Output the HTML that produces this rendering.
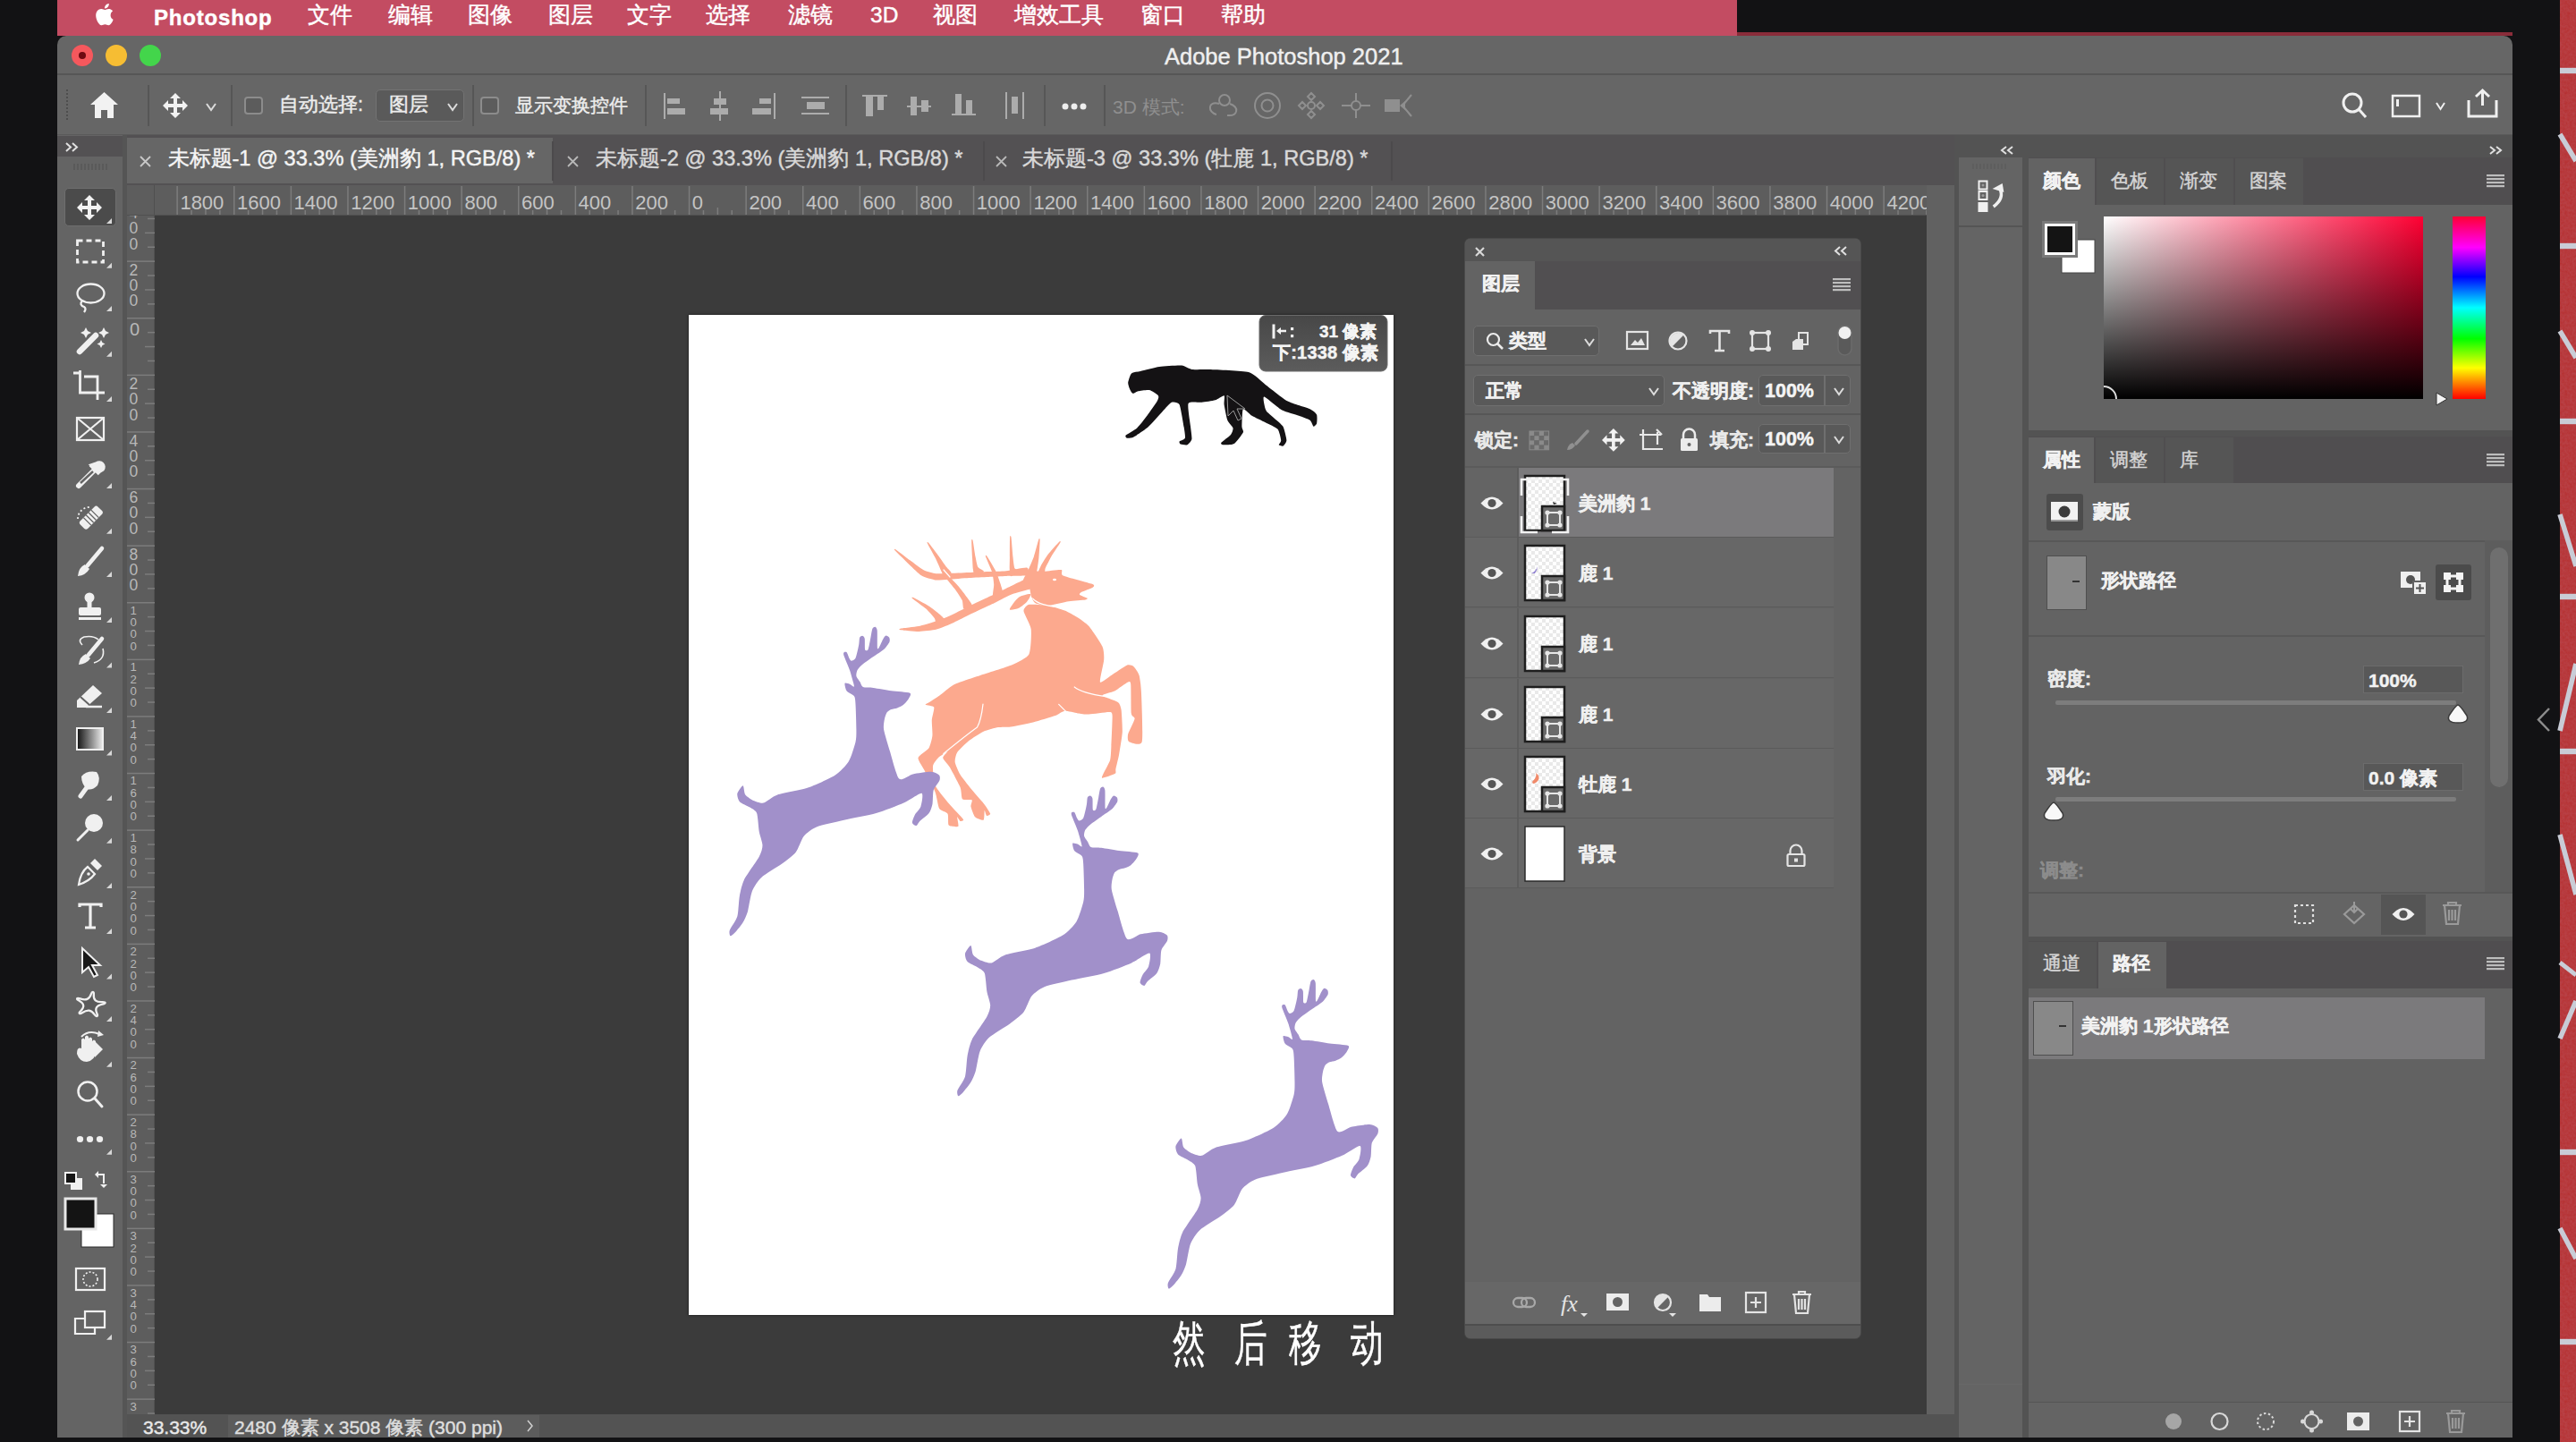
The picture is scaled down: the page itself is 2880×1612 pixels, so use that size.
<!DOCTYPE html><html><head><meta charset="utf-8"><style>
*{margin:0;padding:0;box-sizing:border-box}
html,body{width:2880px;height:1612px;overflow:hidden;background:#121214;font-family:"Liberation Sans",sans-serif;color:#e8e8e8}
.a{position:absolute}
.t{position:absolute;white-space:pre;line-height:1;-webkit-text-stroke:0.45px currentColor}
svg{position:absolute;overflow:visible}
</style></head><body><div class="a" style="left:0px;top:0px;width:2880px;height:1612px;background:#121214;"></div>
<svg style="left:2862px;top:0" width="18" height="1612"><defs><filter id="rt"><feTurbulence type="fractalNoise" baseFrequency="0.35" numOctaves="2" seed="3"/><feColorMatrix values="0 0 0 0 0.5  0 0 0 0 0.08  0 0 0 0 0.1  0 0 0 0.7 0"/><feComposite in2="SourceGraphic" operator="in"/></filter></defs><rect width="18" height="1612" fill="#b52f2f"/><rect width="18" height="1612" fill="#b52f2f" filter="url(#rt)"/><path d="M0 79 L18 79" stroke="#c9ccd6" stroke-width="6.4"/><path d="M0 150 L18 180" stroke="#c9ccd6" stroke-width="5.6000000000000005"/><path d="M0 275 L18 275" stroke="#c9ccd6" stroke-width="6.4"/><path d="M0 370 L18 400" stroke="#c9ccd6" stroke-width="5.6000000000000005"/><path d="M0 471 L18 471" stroke="#c9ccd6" stroke-width="6.4"/><path d="M0 575 L18 633" stroke="#c9ccd6" stroke-width="5.6000000000000005"/><path d="M0 667 L18 667" stroke="#c9ccd6" stroke-width="6.4"/><path d="M0 817 L18 742" stroke="#c9ccd6" stroke-width="5.6000000000000005"/><path d="M0 840 L18 840" stroke="#c9ccd6" stroke-width="6.4"/><path d="M0 933 L18 1000" stroke="#c9ccd6" stroke-width="5.6000000000000005"/><path d="M0 1076 L18 1090" stroke="#c9ccd6" stroke-width="4.800000000000001"/><path d="M0 1161 L18 1119" stroke="#c9ccd6" stroke-width="5.6000000000000005"/><path d="M0 1288 L18 1288" stroke="#c9ccd6" stroke-width="6.4"/><path d="M0 1373 L18 1407" stroke="#c9ccd6" stroke-width="5.6000000000000005"/><path d="M0 1500 L18 1500" stroke="#c9ccd6" stroke-width="6.4"/></svg>
<div class="a" style="left:64px;top:0px;width:1878px;height:40px;background:#c34c62;"></div>
<div class="a" style="left:1942px;top:36px;width:867px;height:4px;background:#8a2c3a;"></div>
<svg style="left:104px;top:2px" width="28" height="28" viewBox="0 0 28 28"><path fill="#fff" d="M19.6 14.9c0-3.1 2.5-4.5 2.6-4.6-1.4-2.1-3.6-2.4-4.4-2.4-1.9-.2-3.6 1.1-4.6 1.1-.9 0-2.4-1.1-4-1-2 0-3.9 1.200-5 3-2.1 3.700-.5 9.200 1.500 12.200 1 1.500 2.200 3.100 3.800 3 1.500-.1 2.100-1 3.900-1s2.300 1 3.900 1c1.600 0 2.700-1.500 3.700-3 1.200-1.700 1.600-3.300 1.700-3.400-.1 0-3.100-1.200-3.100-4.900zM16.600 5.700c.8-1 1.400-2.400 1.200-3.800-1.200.1-2.700.8-3.500 1.800-.8.900-1.500 2.300-1.300 3.700 1.300.1 2.700-.7 3.600-1.700z"/></svg>
<div class="t" style="left:172px;top:8px;font-size:24px;color:#ffffff;font-weight:bold;letter-spacing:0.8px">Photoshop</div>
<div class="t" style="left:344px;top:5px;font-size:24.5px;color:#ffffff;font-weight:normal;">文件</div>
<div class="t" style="left:434px;top:5px;font-size:24.5px;color:#ffffff;font-weight:normal;">编辑</div>
<div class="t" style="left:523px;top:5px;font-size:24.5px;color:#ffffff;font-weight:normal;">图像</div>
<div class="t" style="left:613px;top:5px;font-size:24.5px;color:#ffffff;font-weight:normal;">图层</div>
<div class="t" style="left:701px;top:5px;font-size:24.5px;color:#ffffff;font-weight:normal;">文字</div>
<div class="t" style="left:789px;top:5px;font-size:24.5px;color:#ffffff;font-weight:normal;">选择</div>
<div class="t" style="left:881px;top:5px;font-size:24.5px;color:#ffffff;font-weight:normal;">滤镜</div>
<div class="t" style="left:973px;top:5px;font-size:24.5px;color:#ffffff;font-weight:normal;">3D</div>
<div class="t" style="left:1043px;top:5px;font-size:24.5px;color:#ffffff;font-weight:normal;">视图</div>
<div class="t" style="left:1134px;top:5px;font-size:24.5px;color:#ffffff;font-weight:normal;">增效工具</div>
<div class="t" style="left:1275px;top:5px;font-size:24.5px;color:#ffffff;font-weight:normal;">窗口</div>
<div class="t" style="left:1365px;top:5px;font-size:24.5px;color:#ffffff;font-weight:normal;">帮助</div>
<div class="a" style="left:64px;top:40px;width:2745px;height:1567px;background:#666666;border-radius:10px 10px 0 0"></div>
<div class="a" style="left:64px;top:82px;width:2745px;height:2px;background:#565656;"></div>
<div class="a" style="left:80px;top:49.5px;width:24px;height:24px;border-radius:50%;background:#f5585d"></div>
<div class="a" style="left:118px;top:49.5px;width:24px;height:24px;border-radius:50%;background:#f6bd33"></div>
<div class="a" style="left:156px;top:49.5px;width:24px;height:24px;border-radius:50%;background:#43d54b"></div>
<div class="a" style="left:88px;top:57.5px;width:8px;height:8px;border-radius:50%;background:#6e0a12"></div>
<div class="t" style="left:1302px;top:51px;font-size:25.5px;color:#efefef;font-weight:normal;">Adobe Photoshop 2021</div>
<div class="a" style="left:64px;top:84px;width:2745px;height:67px;background:#666666;"></div>
<div class="a" style="left:64px;top:150px;width:2745px;height:1px;background:#5a5a5a;"></div>
<svg style="left:72px;top:100px" width="6" height="36"><line x1="3" y1="0" x2="3" y2="36" stroke="#4e4e4e" stroke-width="2" stroke-dasharray="2 2"/></svg>
<svg style="left:100px;top:102px" width="33" height="31" viewBox="0 0 33 31"><path fill="#f2f2f2" d="M16.5 1 L32 15 L27 15 L27 30 L20 30 L20 21 L13 21 L13 30 L6 30 L6 15 L1 15 Z"/></svg>
<div class="a" style="left:165px;top:95px;width:2px;height:46px;background:#565656;"></div>
<div class="a" style="left:258px;top:95px;width:2px;height:46px;background:#565656;"></div>
<div class="a" style="left:528px;top:95px;width:2px;height:46px;background:#565656;"></div>
<div class="a" style="left:721px;top:95px;width:2px;height:46px;background:#565656;"></div>
<div class="a" style="left:945px;top:95px;width:2px;height:46px;background:#565656;"></div>
<div class="a" style="left:1167px;top:95px;width:2px;height:46px;background:#565656;"></div>
<div class="a" style="left:1234px;top:95px;width:2px;height:46px;background:#565656;"></div>
<svg style="left:182px;top:104px" width="28" height="28" viewBox="0 0 28 28"><path fill="#f2f2f2" d="M14 0 L20 6 L16 6 L16 12 L22 12 L22 8 L28 14 L22 20 L22 16 L16 16 L16 22 L20 22 L14 28 L8 22 L12 22 L12 16 L6 16 L6 20 L0 14 L6 8 L6 12 L12 12 L12 6 L8 6 Z"/></svg>
<svg style="left:230px;top:115px" width="12" height="9"><polyline points="1,1 6.0,8 11,1" fill="none" stroke="#dcdcdc" stroke-width="2"/></svg>
<div class="a" style="left:273px;top:108px;width:21px;height:20px;border:2px solid #8c8c8c;border-radius:4px;background:#5c5c5c"></div>
<div class="t" style="left:312px;top:107px;font-size:21.5px;color:#ececec;font-weight:normal;">自动选择:</div>
<div class="a" style="left:420px;top:100px;width:99px;height:36px;border:1.5px solid #737373;border-radius:5px;background:#5a5a5a"></div>
<div class="t" style="left:435px;top:107px;font-size:21.5px;color:#ececec;font-weight:normal;">图层</div>
<svg style="left:500px;top:115px" width="12" height="9"><polyline points="1,1 6.0,8 11,1" fill="none" stroke="#dcdcdc" stroke-width="2"/></svg>
<div class="a" style="left:537px;top:108px;width:21px;height:20px;border:2px solid #8c8c8c;border-radius:4px;background:#5c5c5c"></div>
<div class="t" style="left:576px;top:107px;font-size:21.2px;color:#ececec;font-weight:normal;">显示变换控件</div>
<svg style="left:0;top:0" width="2880" height="160">
<g fill="#acacac">
<rect x="742" y="104" width="2" height="29"/><rect x="746" y="110" width="14" height="6"/><rect x="746" y="121" width="20" height="7"/>
<rect x="804" y="102" width="2" height="33"/><rect x="798" y="110" width="14" height="7"/><rect x="794" y="121" width="20" height="7"/>
<rect x="865" y="104" width="2" height="29"/><rect x="849" y="110" width="13" height="6"/><rect x="841" y="121" width="21" height="7"/>
<rect x="896" y="108" width="31" height="2"/><rect x="896" y="126" width="31" height="2"/><rect x="902" y="114" width="20" height="8"/>
<rect x="964" y="106" width="28" height="2"/><rect x="968" y="108" width="8" height="22"/><rect x="981" y="108" width="7" height="15"/>
<rect x="1014" y="118" width="27" height="2"/><rect x="1018" y="108" width="7" height="21"/><rect x="1030" y="112" width="8" height="13"/>
<rect x="1064" y="127" width="27" height="2"/><rect x="1068" y="105" width="7" height="22"/><rect x="1080" y="112" width="7" height="15"/>
<rect x="1124" y="103" width="2" height="30"/><rect x="1143" y="103" width="2" height="30"/><rect x="1131" y="108" width="7" height="19"/>
</g>
<g fill="#eeeeee"><circle cx="1191" cy="119" r="3.5"/><circle cx="1201" cy="119" r="3.5"/><circle cx="1211" cy="119" r="3.5"/></g>
<g fill="none" stroke="#8f8f8f" stroke-width="2">
<circle cx="1369" cy="112" r="6"/><path d="M1363 116 C1350 112 1350 126 1360 128 M1375 116 C1386 120 1384 130 1372 129"/>
<circle cx="1417" cy="118" r="14"/><circle cx="1417" cy="118" r="6.5"/>
<circle cx="1466" cy="118" r="4"/><path d="M1466 104 l4 4 -4 4 -4 -4z M1466 124 l4 4 -4 4 -4 -4z M1452 118 l4 -4 4 4 -4 4z M1472 118 l4 -4 4 4 -4 4z"/>
<circle cx="1516" cy="118" r="5"/><path d="M1516 104 v9 M1516 123 v9 M1500 118 h11 M1521 118 h11"/>
<path d="M1578 106 L1568 118 L1578 130"/>
</g>
<rect x="1548" y="111" width="17" height="14" fill="#8f8f8f"/><path d="M1565 118 l6 -5 v10z" fill="#8f8f8f"/>
<g fill="none" stroke="#f0f0f0" stroke-width="3">
<circle cx="2630" cy="115" r="10"/><line x1="2637" y1="122" x2="2645" y2="131"/>
<path d="M2760 112 v18 h31 v-18 M2775.5 102 v16 M2768 108 l7.5 -7 7.5 7"/>
</g>
<rect x="2675" y="107" width="30" height="23" fill="none" stroke="#f0f0f0" stroke-width="2.5"/>
<rect x="2679" y="111" width="3" height="8" fill="#f0f0f0"/>
<text x="1244" y="127" font-size="21" fill="#8f8f8f" font-family="Liberation Sans">3D 模式:</text>
</svg>
<svg style="left:2723px;top:114px" width="11" height="9"><polyline points="1,1 5.5,8 10,1" fill="none" stroke="#f0f0f0" stroke-width="2"/></svg>
<div class="a" style="left:137px;top:151px;width:2048px;height:56px;background:#535153;"></div>
<div class="a" style="left:142px;top:154px;width:476px;height:51px;background:#666666;"></div>
<svg style="left:156px;top:174px" width="13" height="13"><path d="M1 1 L12 12 M12 1 L1 12" stroke="#c8c8c8" stroke-width="1.8"/></svg>
<div class="t" style="left:187.5px;top:166px;font-size:23.6px;color:#f4f4f4;font-weight:normal;">未标题-1 @ 33.3% (美洲豹 1, RGB/8) *</div>
<div class="a" style="left:617px;top:158px;width:2px;height:44px;background:#4c4a4c;"></div>
<svg style="left:634px;top:174px" width="13" height="13"><path d="M1 1 L12 12 M12 1 L1 12" stroke="#b8b8b8" stroke-width="1.8"/></svg>
<div class="t" style="left:666px;top:166px;font-size:23.6px;color:#d8d8d8;font-weight:normal;">未标题-2 @ 33.3% (美洲豹 1, RGB/8) *</div>
<div class="a" style="left:1099px;top:158px;width:2px;height:44px;background:#4c4a4c;"></div>
<svg style="left:1113px;top:174px" width="13" height="13"><path d="M1 1 L12 12 M12 1 L1 12" stroke="#b8b8b8" stroke-width="1.8"/></svg>
<div class="t" style="left:1143px;top:166px;font-size:23.6px;color:#d8d8d8;font-weight:normal;">未标题-3 @ 33.3% (牡鹿 1, RGB/8) *</div>
<div class="a" style="left:1555px;top:158px;width:2px;height:44px;background:#4c4a4c;"></div>
<div class="a" style="left:64px;top:151px;width:73px;height:1456px;background:#646464;"></div>
<div class="a" style="left:64px;top:152px;width:73px;height:23px;background:#535153;"></div>
<svg style="left:73px;top:159px" width="16" height="11"><path d="M1 1 L6 5.5 L1 10 M8 1 L13 5.5 L8 10" fill="none" stroke="#e0e0e0" stroke-width="2"/></svg>
<svg style="left:82px;top:183px" width="38" height="8"><rect x="0" y="0" width="2" height="7" fill="#5a5a5a"/><rect x="4" y="0" width="2" height="7" fill="#5a5a5a"/><rect x="8" y="0" width="2" height="7" fill="#5a5a5a"/><rect x="12" y="0" width="2" height="7" fill="#5a5a5a"/><rect x="16" y="0" width="2" height="7" fill="#5a5a5a"/><rect x="20" y="0" width="2" height="7" fill="#5a5a5a"/><rect x="24" y="0" width="2" height="7" fill="#5a5a5a"/><rect x="28" y="0" width="2" height="7" fill="#5a5a5a"/><rect x="32" y="0" width="2" height="7" fill="#5a5a5a"/><rect x="36" y="0" width="2" height="7" fill="#5a5a5a"/></svg>
<div class="a" style="left:137px;top:151px;width:5px;height:1456px;background:#555555;"></div>
<div class="a" style="left:72px;top:210px;width:58px;height:43px;background:#4b4b4b;border-radius:5px;border:1px solid #6e6e6e"></div>
<div class="a" style="left:142px;top:207px;width:2012px;height:34px;background:#5d5d5d;"></div>
<div class="a" style="left:142px;top:207px;width:31px;height:1374px;background:#5d5d5d;"></div>
<div class="a" style="left:142px;top:240px;width:2012px;height:1px;background:#505050;"></div>
<div class="a" style="left:172px;top:207px;width:1px;height:1374px;background:#505050;"></div>
<svg style="left:0;top:0" width="2880" height="1612"><rect x="197.4" y="208" width="1.5" height="32" fill="#7c7c7c"/><rect x="213.3" y="235" width="1.5" height="5" fill="#7c7c7c"/><rect x="229.2" y="232" width="1.5" height="8" fill="#7c7c7c"/><rect x="245.1" y="235" width="1.5" height="5" fill="#7c7c7c"/><rect x="261.0" y="208" width="1.5" height="32" fill="#7c7c7c"/><rect x="276.9" y="235" width="1.5" height="5" fill="#7c7c7c"/><rect x="292.8" y="232" width="1.5" height="8" fill="#7c7c7c"/><rect x="308.7" y="235" width="1.5" height="5" fill="#7c7c7c"/><rect x="324.6" y="208" width="1.5" height="32" fill="#7c7c7c"/><rect x="340.5" y="235" width="1.5" height="5" fill="#7c7c7c"/><rect x="356.4" y="232" width="1.5" height="8" fill="#7c7c7c"/><rect x="372.3" y="235" width="1.5" height="5" fill="#7c7c7c"/><rect x="388.2" y="208" width="1.5" height="32" fill="#7c7c7c"/><rect x="404.1" y="235" width="1.5" height="5" fill="#7c7c7c"/><rect x="420.0" y="232" width="1.5" height="8" fill="#7c7c7c"/><rect x="435.9" y="235" width="1.5" height="5" fill="#7c7c7c"/><rect x="451.8" y="208" width="1.5" height="32" fill="#7c7c7c"/><rect x="467.7" y="235" width="1.5" height="5" fill="#7c7c7c"/><rect x="483.6" y="232" width="1.5" height="8" fill="#7c7c7c"/><rect x="499.5" y="235" width="1.5" height="5" fill="#7c7c7c"/><rect x="515.4" y="208" width="1.5" height="32" fill="#7c7c7c"/><rect x="531.3" y="235" width="1.5" height="5" fill="#7c7c7c"/><rect x="547.2" y="232" width="1.5" height="8" fill="#7c7c7c"/><rect x="563.1" y="235" width="1.5" height="5" fill="#7c7c7c"/><rect x="579.0" y="208" width="1.5" height="32" fill="#7c7c7c"/><rect x="594.9" y="235" width="1.5" height="5" fill="#7c7c7c"/><rect x="610.8" y="232" width="1.5" height="8" fill="#7c7c7c"/><rect x="626.7" y="235" width="1.5" height="5" fill="#7c7c7c"/><rect x="642.6" y="208" width="1.5" height="32" fill="#7c7c7c"/><rect x="658.5" y="235" width="1.5" height="5" fill="#7c7c7c"/><rect x="674.4" y="232" width="1.5" height="8" fill="#7c7c7c"/><rect x="690.3" y="235" width="1.5" height="5" fill="#7c7c7c"/><rect x="706.2" y="208" width="1.5" height="32" fill="#7c7c7c"/><rect x="722.1" y="235" width="1.5" height="5" fill="#7c7c7c"/><rect x="738.0" y="232" width="1.5" height="8" fill="#7c7c7c"/><rect x="753.9" y="235" width="1.5" height="5" fill="#7c7c7c"/><rect x="769.8" y="208" width="1.5" height="32" fill="#7c7c7c"/><rect x="785.7" y="235" width="1.5" height="5" fill="#7c7c7c"/><rect x="801.6" y="232" width="1.5" height="8" fill="#7c7c7c"/><rect x="817.5" y="235" width="1.5" height="5" fill="#7c7c7c"/><rect x="833.4" y="208" width="1.5" height="32" fill="#7c7c7c"/><rect x="849.3" y="235" width="1.5" height="5" fill="#7c7c7c"/><rect x="865.2" y="232" width="1.5" height="8" fill="#7c7c7c"/><rect x="881.1" y="235" width="1.5" height="5" fill="#7c7c7c"/><rect x="897.0" y="208" width="1.5" height="32" fill="#7c7c7c"/><rect x="912.9" y="235" width="1.5" height="5" fill="#7c7c7c"/><rect x="928.8" y="232" width="1.5" height="8" fill="#7c7c7c"/><rect x="944.7" y="235" width="1.5" height="5" fill="#7c7c7c"/><rect x="960.6" y="208" width="1.5" height="32" fill="#7c7c7c"/><rect x="976.5" y="235" width="1.5" height="5" fill="#7c7c7c"/><rect x="992.4" y="232" width="1.5" height="8" fill="#7c7c7c"/><rect x="1008.3" y="235" width="1.5" height="5" fill="#7c7c7c"/><rect x="1024.2" y="208" width="1.5" height="32" fill="#7c7c7c"/><rect x="1040.1" y="235" width="1.5" height="5" fill="#7c7c7c"/><rect x="1056.0" y="232" width="1.5" height="8" fill="#7c7c7c"/><rect x="1071.9" y="235" width="1.5" height="5" fill="#7c7c7c"/><rect x="1087.8" y="208" width="1.5" height="32" fill="#7c7c7c"/><rect x="1103.7" y="235" width="1.5" height="5" fill="#7c7c7c"/><rect x="1119.6" y="232" width="1.5" height="8" fill="#7c7c7c"/><rect x="1135.5" y="235" width="1.5" height="5" fill="#7c7c7c"/><rect x="1151.4" y="208" width="1.5" height="32" fill="#7c7c7c"/><rect x="1167.3" y="235" width="1.5" height="5" fill="#7c7c7c"/><rect x="1183.2" y="232" width="1.5" height="8" fill="#7c7c7c"/><rect x="1199.1" y="235" width="1.5" height="5" fill="#7c7c7c"/><rect x="1215.0" y="208" width="1.5" height="32" fill="#7c7c7c"/><rect x="1230.9" y="235" width="1.5" height="5" fill="#7c7c7c"/><rect x="1246.8" y="232" width="1.5" height="8" fill="#7c7c7c"/><rect x="1262.7" y="235" width="1.5" height="5" fill="#7c7c7c"/><rect x="1278.6" y="208" width="1.5" height="32" fill="#7c7c7c"/><rect x="1294.5" y="235" width="1.5" height="5" fill="#7c7c7c"/><rect x="1310.4" y="232" width="1.5" height="8" fill="#7c7c7c"/><rect x="1326.3" y="235" width="1.5" height="5" fill="#7c7c7c"/><rect x="1342.2" y="208" width="1.5" height="32" fill="#7c7c7c"/><rect x="1358.1" y="235" width="1.5" height="5" fill="#7c7c7c"/><rect x="1374.0" y="232" width="1.5" height="8" fill="#7c7c7c"/><rect x="1389.9" y="235" width="1.5" height="5" fill="#7c7c7c"/><rect x="1405.8" y="208" width="1.5" height="32" fill="#7c7c7c"/><rect x="1421.7" y="235" width="1.5" height="5" fill="#7c7c7c"/><rect x="1437.6" y="232" width="1.5" height="8" fill="#7c7c7c"/><rect x="1453.5" y="235" width="1.5" height="5" fill="#7c7c7c"/><rect x="1469.4" y="208" width="1.5" height="32" fill="#7c7c7c"/><rect x="1485.3" y="235" width="1.5" height="5" fill="#7c7c7c"/><rect x="1501.2" y="232" width="1.5" height="8" fill="#7c7c7c"/><rect x="1517.1" y="235" width="1.5" height="5" fill="#7c7c7c"/><rect x="1533.0" y="208" width="1.5" height="32" fill="#7c7c7c"/><rect x="1548.9" y="235" width="1.5" height="5" fill="#7c7c7c"/><rect x="1564.8" y="232" width="1.5" height="8" fill="#7c7c7c"/><rect x="1580.7" y="235" width="1.5" height="5" fill="#7c7c7c"/><rect x="1596.6" y="208" width="1.5" height="32" fill="#7c7c7c"/><rect x="1612.5" y="235" width="1.5" height="5" fill="#7c7c7c"/><rect x="1628.4" y="232" width="1.5" height="8" fill="#7c7c7c"/><rect x="1644.3" y="235" width="1.5" height="5" fill="#7c7c7c"/><rect x="1660.2" y="208" width="1.5" height="32" fill="#7c7c7c"/><rect x="1676.1" y="235" width="1.5" height="5" fill="#7c7c7c"/><rect x="1692.0" y="232" width="1.5" height="8" fill="#7c7c7c"/><rect x="1707.9" y="235" width="1.5" height="5" fill="#7c7c7c"/><rect x="1723.8" y="208" width="1.5" height="32" fill="#7c7c7c"/><rect x="1739.7" y="235" width="1.5" height="5" fill="#7c7c7c"/><rect x="1755.6" y="232" width="1.5" height="8" fill="#7c7c7c"/><rect x="1771.5" y="235" width="1.5" height="5" fill="#7c7c7c"/><rect x="1787.4" y="208" width="1.5" height="32" fill="#7c7c7c"/><rect x="1803.3" y="235" width="1.5" height="5" fill="#7c7c7c"/><rect x="1819.2" y="232" width="1.5" height="8" fill="#7c7c7c"/><rect x="1835.1" y="235" width="1.5" height="5" fill="#7c7c7c"/><rect x="1851.0" y="208" width="1.5" height="32" fill="#7c7c7c"/><rect x="1866.9" y="235" width="1.5" height="5" fill="#7c7c7c"/><rect x="1882.8" y="232" width="1.5" height="8" fill="#7c7c7c"/><rect x="1898.7" y="235" width="1.5" height="5" fill="#7c7c7c"/><rect x="1914.6" y="208" width="1.5" height="32" fill="#7c7c7c"/><rect x="1930.5" y="235" width="1.5" height="5" fill="#7c7c7c"/><rect x="1946.4" y="232" width="1.5" height="8" fill="#7c7c7c"/><rect x="1962.3" y="235" width="1.5" height="5" fill="#7c7c7c"/><rect x="1978.2" y="208" width="1.5" height="32" fill="#7c7c7c"/><rect x="1994.1" y="235" width="1.5" height="5" fill="#7c7c7c"/><rect x="2010.0" y="232" width="1.5" height="8" fill="#7c7c7c"/><rect x="2025.9" y="235" width="1.5" height="5" fill="#7c7c7c"/><rect x="2041.8" y="208" width="1.5" height="32" fill="#7c7c7c"/><rect x="2057.7" y="235" width="1.5" height="5" fill="#7c7c7c"/><rect x="2073.6" y="232" width="1.5" height="8" fill="#7c7c7c"/><rect x="2089.5" y="235" width="1.5" height="5" fill="#7c7c7c"/><rect x="2105.4" y="208" width="1.5" height="32" fill="#7c7c7c"/><rect x="2121.3" y="235" width="1.5" height="5" fill="#7c7c7c"/><rect x="2137.2" y="232" width="1.5" height="8" fill="#7c7c7c"/><rect x="2153.1" y="235" width="1.5" height="5" fill="#7c7c7c"/><clipPath id="rc"><rect x="173" y="207" width="1981" height="34"/></clipPath><g clip-path="url(#rc)" font-family="Liberation Sans" font-size="22" fill="#c4c4c4"><text x="201.4" y="234">1800</text><text x="265.0" y="234">1600</text><text x="328.6" y="234">1400</text><text x="392.2" y="234">1200</text><text x="455.8" y="234">1000</text><text x="519.4" y="234">800</text><text x="583.0" y="234">600</text><text x="646.6" y="234">400</text><text x="710.2" y="234">200</text><text x="773.8" y="234">0</text><text x="837.4" y="234">200</text><text x="901.0" y="234">400</text><text x="964.6" y="234">600</text><text x="1028.2" y="234">800</text><text x="1091.8" y="234">1000</text><text x="1155.4" y="234">1200</text><text x="1219.0" y="234">1400</text><text x="1282.6" y="234">1600</text><text x="1346.2" y="234">1800</text><text x="1409.8" y="234">2000</text><text x="1473.4" y="234">2200</text><text x="1537.0" y="234">2400</text><text x="1600.6" y="234">2600</text><text x="1664.2" y="234">2800</text><text x="1727.8" y="234">3000</text><text x="1791.4" y="234">3200</text><text x="1855.0" y="234">3400</text><text x="1918.6" y="234">3600</text><text x="1982.2" y="234">3800</text><text x="2045.8" y="234">4000</text><text x="2109.4" y="234">4200</text></g><clipPath id="rv"><rect x="142" y="241" width="31" height="1340"/></clipPath><g clip-path="url(#rv)" font-family="Liberation Sans" font-size="14" fill="#b8b8b8"><rect x="142" y="164.2" width="31" height="1.5" fill="#7c7c7c"/><rect x="165" y="180.1" width="8" height="1.5" fill="#7c7c7c"/><rect x="162" y="196.0" width="11" height="1.5" fill="#7c7c7c"/><rect x="165" y="211.9" width="8" height="1.5" fill="#7c7c7c"/><text x="144.5" y="180.5" font-size="17.5">6</text><text x="144.5" y="197.8" font-size="17.5">0</text><text x="144.5" y="215.1" font-size="17.5">0</text><rect x="142" y="227.8" width="31" height="1.5" fill="#7c7c7c"/><rect x="165" y="243.7" width="8" height="1.5" fill="#7c7c7c"/><rect x="162" y="259.6" width="11" height="1.5" fill="#7c7c7c"/><rect x="165" y="275.5" width="8" height="1.5" fill="#7c7c7c"/><text x="144.5" y="244.1" font-size="17.5">4</text><text x="144.5" y="261.4" font-size="17.5">0</text><text x="144.5" y="278.7" font-size="17.5">0</text><rect x="142" y="291.4" width="31" height="1.5" fill="#7c7c7c"/><rect x="165" y="307.3" width="8" height="1.5" fill="#7c7c7c"/><rect x="162" y="323.2" width="11" height="1.5" fill="#7c7c7c"/><rect x="165" y="339.1" width="8" height="1.5" fill="#7c7c7c"/><text x="144.5" y="307.7" font-size="17.5">2</text><text x="144.5" y="325.0" font-size="17.5">0</text><text x="144.5" y="342.3" font-size="17.5">0</text><rect x="142" y="355.0" width="31" height="1.5" fill="#7c7c7c"/><rect x="165" y="370.9" width="8" height="1.5" fill="#7c7c7c"/><rect x="162" y="386.8" width="11" height="1.5" fill="#7c7c7c"/><rect x="165" y="402.7" width="8" height="1.5" fill="#7c7c7c"/><text x="145" y="375.0" font-size="20">0</text><rect x="142" y="418.6" width="31" height="1.5" fill="#7c7c7c"/><rect x="165" y="434.5" width="8" height="1.5" fill="#7c7c7c"/><rect x="162" y="450.4" width="11" height="1.5" fill="#7c7c7c"/><rect x="165" y="466.3" width="8" height="1.5" fill="#7c7c7c"/><text x="144.5" y="434.9" font-size="17.5">2</text><text x="144.5" y="452.2" font-size="17.5">0</text><text x="144.5" y="469.5" font-size="17.5">0</text><rect x="142" y="482.2" width="31" height="1.5" fill="#7c7c7c"/><rect x="165" y="498.1" width="8" height="1.5" fill="#7c7c7c"/><rect x="162" y="514.0" width="11" height="1.5" fill="#7c7c7c"/><rect x="165" y="529.9" width="8" height="1.5" fill="#7c7c7c"/><text x="144.5" y="498.5" font-size="17.5">4</text><text x="144.5" y="515.8" font-size="17.5">0</text><text x="144.5" y="533.1" font-size="17.5">0</text><rect x="142" y="545.8" width="31" height="1.5" fill="#7c7c7c"/><rect x="165" y="561.7" width="8" height="1.5" fill="#7c7c7c"/><rect x="162" y="577.6" width="11" height="1.5" fill="#7c7c7c"/><rect x="165" y="593.5" width="8" height="1.5" fill="#7c7c7c"/><text x="144.5" y="562.1" font-size="17.5">6</text><text x="144.5" y="579.4" font-size="17.5">0</text><text x="144.5" y="596.7" font-size="17.5">0</text><rect x="142" y="609.4" width="31" height="1.5" fill="#7c7c7c"/><rect x="165" y="625.3" width="8" height="1.5" fill="#7c7c7c"/><rect x="162" y="641.2" width="11" height="1.5" fill="#7c7c7c"/><rect x="165" y="657.1" width="8" height="1.5" fill="#7c7c7c"/><text x="144.5" y="625.7" font-size="17.5">8</text><text x="144.5" y="643.0" font-size="17.5">0</text><text x="144.5" y="660.3" font-size="17.5">0</text><rect x="142" y="673.0" width="31" height="1.5" fill="#7c7c7c"/><rect x="165" y="688.9" width="8" height="1.5" fill="#7c7c7c"/><rect x="162" y="704.8" width="11" height="1.5" fill="#7c7c7c"/><rect x="165" y="720.7" width="8" height="1.5" fill="#7c7c7c"/><text x="145.5" y="686.6" font-size="13.2">1</text><text x="145.5" y="699.9" font-size="13.2">0</text><text x="145.5" y="713.2" font-size="13.2">0</text><text x="145.5" y="726.5" font-size="13.2">0</text><rect x="142" y="736.6" width="31" height="1.5" fill="#7c7c7c"/><rect x="165" y="752.5" width="8" height="1.5" fill="#7c7c7c"/><rect x="162" y="768.4" width="11" height="1.5" fill="#7c7c7c"/><rect x="165" y="784.3" width="8" height="1.5" fill="#7c7c7c"/><text x="145.5" y="750.2" font-size="13.2">1</text><text x="145.5" y="763.5" font-size="13.2">2</text><text x="145.5" y="776.8" font-size="13.2">0</text><text x="145.5" y="790.1" font-size="13.2">0</text><rect x="142" y="800.2" width="31" height="1.5" fill="#7c7c7c"/><rect x="165" y="816.1" width="8" height="1.5" fill="#7c7c7c"/><rect x="162" y="832.0" width="11" height="1.5" fill="#7c7c7c"/><rect x="165" y="847.9" width="8" height="1.5" fill="#7c7c7c"/><text x="145.5" y="813.8" font-size="13.2">1</text><text x="145.5" y="827.1" font-size="13.2">4</text><text x="145.5" y="840.4" font-size="13.2">0</text><text x="145.5" y="853.7" font-size="13.2">0</text><rect x="142" y="863.8" width="31" height="1.5" fill="#7c7c7c"/><rect x="165" y="879.7" width="8" height="1.5" fill="#7c7c7c"/><rect x="162" y="895.6" width="11" height="1.5" fill="#7c7c7c"/><rect x="165" y="911.5" width="8" height="1.5" fill="#7c7c7c"/><text x="145.5" y="877.4" font-size="13.2">1</text><text x="145.5" y="890.7" font-size="13.2">6</text><text x="145.5" y="904.0" font-size="13.2">0</text><text x="145.5" y="917.3" font-size="13.2">0</text><rect x="142" y="927.4" width="31" height="1.5" fill="#7c7c7c"/><rect x="165" y="943.3" width="8" height="1.5" fill="#7c7c7c"/><rect x="162" y="959.2" width="11" height="1.5" fill="#7c7c7c"/><rect x="165" y="975.1" width="8" height="1.5" fill="#7c7c7c"/><text x="145.5" y="941.0" font-size="13.2">1</text><text x="145.5" y="954.3" font-size="13.2">8</text><text x="145.5" y="967.6" font-size="13.2">0</text><text x="145.5" y="980.9" font-size="13.2">0</text><rect x="142" y="991.0" width="31" height="1.5" fill="#7c7c7c"/><rect x="165" y="1006.9" width="8" height="1.5" fill="#7c7c7c"/><rect x="162" y="1022.8" width="11" height="1.5" fill="#7c7c7c"/><rect x="165" y="1038.7" width="8" height="1.5" fill="#7c7c7c"/><text x="145.5" y="1004.6" font-size="13.2">2</text><text x="145.5" y="1017.9" font-size="13.2">0</text><text x="145.5" y="1031.2" font-size="13.2">0</text><text x="145.5" y="1044.5" font-size="13.2">0</text><rect x="142" y="1054.6" width="31" height="1.5" fill="#7c7c7c"/><rect x="165" y="1070.5" width="8" height="1.5" fill="#7c7c7c"/><rect x="162" y="1086.4" width="11" height="1.5" fill="#7c7c7c"/><rect x="165" y="1102.3" width="8" height="1.5" fill="#7c7c7c"/><text x="145.5" y="1068.2" font-size="13.2">2</text><text x="145.5" y="1081.5" font-size="13.2">2</text><text x="145.5" y="1094.8" font-size="13.2">0</text><text x="145.5" y="1108.1" font-size="13.2">0</text><rect x="142" y="1118.2" width="31" height="1.5" fill="#7c7c7c"/><rect x="165" y="1134.1" width="8" height="1.5" fill="#7c7c7c"/><rect x="162" y="1150.0" width="11" height="1.5" fill="#7c7c7c"/><rect x="165" y="1165.9" width="8" height="1.5" fill="#7c7c7c"/><text x="145.5" y="1131.8" font-size="13.2">2</text><text x="145.5" y="1145.1" font-size="13.2">4</text><text x="145.5" y="1158.4" font-size="13.2">0</text><text x="145.5" y="1171.7" font-size="13.2">0</text><rect x="142" y="1181.8" width="31" height="1.5" fill="#7c7c7c"/><rect x="165" y="1197.7" width="8" height="1.5" fill="#7c7c7c"/><rect x="162" y="1213.6" width="11" height="1.5" fill="#7c7c7c"/><rect x="165" y="1229.5" width="8" height="1.5" fill="#7c7c7c"/><text x="145.5" y="1195.4" font-size="13.2">2</text><text x="145.5" y="1208.7" font-size="13.2">6</text><text x="145.5" y="1222.0" font-size="13.2">0</text><text x="145.5" y="1235.3" font-size="13.2">0</text><rect x="142" y="1245.4" width="31" height="1.5" fill="#7c7c7c"/><rect x="165" y="1261.3" width="8" height="1.5" fill="#7c7c7c"/><rect x="162" y="1277.2" width="11" height="1.5" fill="#7c7c7c"/><rect x="165" y="1293.1" width="8" height="1.5" fill="#7c7c7c"/><text x="145.5" y="1259.0" font-size="13.2">2</text><text x="145.5" y="1272.3" font-size="13.2">8</text><text x="145.5" y="1285.6" font-size="13.2">0</text><text x="145.5" y="1298.9" font-size="13.2">0</text><rect x="142" y="1309.0" width="31" height="1.5" fill="#7c7c7c"/><rect x="165" y="1324.9" width="8" height="1.5" fill="#7c7c7c"/><rect x="162" y="1340.8" width="11" height="1.5" fill="#7c7c7c"/><rect x="165" y="1356.7" width="8" height="1.5" fill="#7c7c7c"/><text x="145.5" y="1322.6" font-size="13.2">3</text><text x="145.5" y="1335.9" font-size="13.2">0</text><text x="145.5" y="1349.2" font-size="13.2">0</text><text x="145.5" y="1362.5" font-size="13.2">0</text><rect x="142" y="1372.6" width="31" height="1.5" fill="#7c7c7c"/><rect x="165" y="1388.5" width="8" height="1.5" fill="#7c7c7c"/><rect x="162" y="1404.4" width="11" height="1.5" fill="#7c7c7c"/><rect x="165" y="1420.3" width="8" height="1.5" fill="#7c7c7c"/><text x="145.5" y="1386.2" font-size="13.2">3</text><text x="145.5" y="1399.5" font-size="13.2">2</text><text x="145.5" y="1412.8" font-size="13.2">0</text><text x="145.5" y="1426.1" font-size="13.2">0</text><rect x="142" y="1436.2" width="31" height="1.5" fill="#7c7c7c"/><rect x="165" y="1452.1" width="8" height="1.5" fill="#7c7c7c"/><rect x="162" y="1468.0" width="11" height="1.5" fill="#7c7c7c"/><rect x="165" y="1483.9" width="8" height="1.5" fill="#7c7c7c"/><text x="145.5" y="1449.8" font-size="13.2">3</text><text x="145.5" y="1463.1" font-size="13.2">4</text><text x="145.5" y="1476.4" font-size="13.2">0</text><text x="145.5" y="1489.7" font-size="13.2">0</text><rect x="142" y="1499.8" width="31" height="1.5" fill="#7c7c7c"/><rect x="165" y="1515.7" width="8" height="1.5" fill="#7c7c7c"/><rect x="162" y="1531.6" width="11" height="1.5" fill="#7c7c7c"/><rect x="165" y="1547.5" width="8" height="1.5" fill="#7c7c7c"/><text x="145.5" y="1513.4" font-size="13.2">3</text><text x="145.5" y="1526.7" font-size="13.2">6</text><text x="145.5" y="1540.0" font-size="13.2">0</text><text x="145.5" y="1553.3" font-size="13.2">0</text><rect x="142" y="1563.4" width="31" height="1.5" fill="#7c7c7c"/><rect x="165" y="1579.3" width="8" height="1.5" fill="#7c7c7c"/><rect x="162" y="1595.2" width="11" height="1.5" fill="#7c7c7c"/><rect x="165" y="1611.1" width="8" height="1.5" fill="#7c7c7c"/><text x="145.5" y="1577.0" font-size="13.2">3</text><text x="145.5" y="1590.3" font-size="13.2">8</text><text x="145.5" y="1603.6" font-size="13.2">0</text><text x="145.5" y="1616.9" font-size="13.2">0</text></g></svg>
<div class="a" style="left:173px;top:241px;width:1981px;height:1340px;background:#3b3b3b;"></div>
<div class="a" style="left:2154px;top:207px;width:31px;height:1374px;background:#616161;"></div>
<div class="a" style="left:142px;top:1581px;width:2043px;height:26px;background:#535353;"></div>
<div class="a" style="left:255px;top:1582px;width:348px;height:25px;background:#5c5c5c;"></div>
<div class="t" style="left:160px;top:1585px;font-size:21px;color:#e8e8e8;font-weight:normal;">33.33%</div>
<div class="t" style="left:262px;top:1585px;font-size:21px;color:#dedede;font-weight:normal;">2480 像素 x 3508 像素 (300 ppi)</div>
<svg style="left:589px;top:1587px" width="8" height="14"><path d="M1 1 L6 7 L1 13" fill="none" stroke="#d0d0d0" stroke-width="1.5"/></svg>
<div class="a" style="left:770px;top:352px;width:788px;height:1118px;background:#ffffff;box-shadow:0 0 3px rgba(0,0,0,0.6)"></div>
<svg style="left:0;top:0" width="200" height="1612"><path d="M125 244 L119 250 L125 250 Z" fill="#d8d8d8"/><path d="M125 293.7 L119 299.7 L125 299.7 Z" fill="#d8d8d8"/><path d="M125 342 L119 348 L125 348 Z" fill="#d8d8d8"/><path d="M125 392.8 L119 398.8 L125 398.8 Z" fill="#d8d8d8"/><path d="M125 443 L119 449 L125 449 Z" fill="#d8d8d8"/><path d="M125 540 L119 546 L125 546 Z" fill="#d8d8d8"/><path d="M125 590.8 L119 596.8 L125 596.8 Z" fill="#d8d8d8"/><path d="M125 639 L119 645 L125 645 Z" fill="#d8d8d8"/><path d="M125 690 L119 696 L125 696 Z" fill="#d8d8d8"/><path d="M125 740.5 L119 746.5 L125 746.5 Z" fill="#d8d8d8"/><path d="M125 791 L119 797 L125 797 Z" fill="#d8d8d8"/><path d="M125 838.6 L119 844.6 L125 844.6 Z" fill="#d8d8d8"/><path d="M125 889 L119 895 L125 895 Z" fill="#d8d8d8"/><path d="M125 936.7 L119 942.7 L125 942.7 Z" fill="#d8d8d8"/><path d="M125 987 L119 993 L125 993 Z" fill="#d8d8d8"/><path d="M125 1038 L119 1044 L125 1044 Z" fill="#d8d8d8"/><path d="M125 1088.6 L119 1094.6 L125 1094.6 Z" fill="#d8d8d8"/><path d="M125 1136 L119 1142 L125 1142 Z" fill="#d8d8d8"/><path d="M125 1186.7 L119 1192.7 L125 1192.7 Z" fill="#d8d8d8"/><path d="M125 1284.8 L119 1290.8 L125 1290.8 Z" fill="#d8d8d8"/><path d="M125 1491.7 L119 1497.7 L125 1497.7 Z" fill="#d8d8d8"/><g transform="translate(86,218)"><path fill="#f2f2f2" d="M14 0 L20 6 L16 6 L16 12 L22 12 L22 8 L28 14 L22 20 L22 16 L16 16 L16 22 L20 22 L14 28 L8 22 L12 22 L12 16 L6 16 L6 20 L0 14 L6 8 L6 12 L12 12 L12 6 L8 6 Z"/></g><rect x="86.5" y="269" width="29" height="24" fill="none" stroke="#f0f0f0" stroke-width="2.8" stroke-dasharray="6 4"/><ellipse cx="101.5" cy="328" rx="15" ry="10.5" fill="none" stroke="#f0f0f0" stroke-width="2.3"/><path d="M92 336 q-4 5 2 7 q3 2 0 6" fill="none" stroke="#f0f0f0" stroke-width="2.3"/><line x1="89" y1="393" x2="107" y2="375" stroke="#f0f0f0" stroke-width="6.5" stroke-linecap="round"/><path d="M96 366 l2 4 4 2 -4 2 -2 4 -2 -4 -4 -2 4 -2z M116 366 l2 4 4 2 -4 2 -2 4 -2 -4 -4 -2 4 -2z M113 380 l1.5 3 3 1.5 -3 1.5 -1.5 3 -1.5 -3 -3 -1.5 3 -1.5z" fill="#f0f0f0"/><path d="M82 417 h8 M89.5 414 v25 h20 M117 439 h-7 M94 421 h15 v26" fill="none" stroke="#f0f0f0" stroke-width="2.8"/><g fill="none" stroke="#f0f0f0" stroke-width="2.2"><rect x="86" y="467" width="30" height="25"/><path d="M86 467 L116 492 M116 467 L86 492"/></g><path d="M88 543 L105 526" stroke="#f0f0f0" stroke-width="6" stroke-linecap="round" fill="none"/><path d="M90 540 L104 527" stroke="#646464" stroke-width="2.5"/><path d="M101 520 l10 10 M108 518 a5 5 0 0 1 7 7 l-5 3 -8 -8z" stroke="#f0f0f0" stroke-width="3.5" fill="#f0f0f0"/><g transform="rotate(-45 101.5 579)"><rect x="88" y="573" width="28" height="12" rx="3" fill="#f0f0f0"/><path d="M96 573 v12 M100 573 v12 M104 573 v12 M108 573 v12" stroke="#646464" stroke-width="1.3"/></g><path d="M87 580 a13 13 0 0 1 13 -13" fill="none" stroke="#f0f0f0" stroke-width="1.8" stroke-dasharray="2 2.5"/><path d="M114 613 L98 632" stroke="#f0f0f0" stroke-width="4.5" stroke-linecap="round"/><path d="M87 644 q1 -10 8 -13 l5 5 q-4 7 -13 8z" fill="#f0f0f0"/><circle cx="100" cy="668" r="5.5" fill="#f0f0f0"/><rect x="97.5" y="671" width="5" height="8" fill="#f0f0f0"/><rect x="88" y="679" width="25" height="9" rx="2" fill="#f0f0f0"/><rect x="88" y="690" width="25" height="3" fill="#f0f0f0"/><path d="M114 714 L99 732" stroke="#f0f0f0" stroke-width="4.5" stroke-linecap="round"/><path d="M88 743 q1 -9 8 -12 l5 5 q-4 6 -13 7z" fill="#f0f0f0"/><path d="M92 721 q-6 -6 2 -9 q10 -2 16 3 M115 725 q3 12 -10 16" fill="none" stroke="#f0f0f0" stroke-width="1.6"/><path d="M86 783 L104 766 L114 775 L96 791 L86 791 Z" fill="#f0f0f0"/><path d="M90 779 L100 788" stroke="#646464" stroke-width="2"/><path d="M96 790 h18" stroke="#f0f0f0" stroke-width="2.5"/><defs><linearGradient id="gt" x1="0" x2="1"><stop offset="0" stop-color="#111"/><stop offset="1" stop-color="#eee"/></linearGradient></defs><rect x="86" y="814" width="29" height="24" fill="url(#gt)" stroke="#f0f0f0" stroke-width="2"/><path d="M90 890 L103 872" stroke="#f0f0f0" stroke-width="5" stroke-linecap="round"/><path d="M91 868 q6 -7 17 -5 q5 6 1 15 q-6 6 -12 4 q-6 -6 -6 -14z" fill="#f0f0f0"/><circle cx="105" cy="920" r="10" fill="#f0f0f0"/><line x1="87" y1="939" x2="98" y2="928" stroke="#f0f0f0" stroke-width="3" stroke-linecap="round"/><path d="M88 989 q2 -14 10 -20 l8 8 q-6 8 -18 12z" fill="none" stroke="#f0f0f0" stroke-width="2.2"/><path d="M101 965 l5 -5 8 8 -5 5z" fill="#f0f0f0"/><circle cx="99" cy="977" r="1.8" fill="#f0f0f0"/><path d="M89 1014 v-3 h24 v3 M101 1011 v26 M95 1037 h12" fill="none" stroke="#f0f0f0" stroke-width="3.2"/><path d="M92 1060 L92 1087 L99 1081 L105 1092 L109 1090 L103 1079 L112 1079 Z" fill="#1a1a1a" stroke="#f0f0f0" stroke-width="2"/><path d="M103.9 1108.8 C106.7 1109.2 102.5 1114.7 106.7 1118.3 C110.8 1122.0 117.2 1118.6 117.6 1121.0 C118.0 1123.4 110.7 1121.7 108.0 1126.2 C105.2 1130.7 110.9 1134.9 108.4 1135.9 C105.9 1137.0 105.5 1130.5 99.6 1129.6 C93.8 1128.8 90.8 1134.7 88.9 1133.0 C87.0 1131.3 94.0 1129.0 93.2 1123.9 C92.4 1118.9 84.9 1118.3 86.2 1116.2 C87.5 1114.1 92.2 1119.2 97.5 1116.9 C102.9 1114.7 101.2 1108.4 103.9 1108.8Z" fill="#5a5a5a" stroke="#f0f0f0" stroke-width="2.3"/><path d="M86 1178 q0 -8 5 -6 v-10 q2 -3 4 0 v8 v-11 q2 -3 4 0 v11 v-9 q2 -3 4 0 v9 v-6 q2 -3 4 0 v11 q0 10 -10 12 q-8 0 -11 -9z" fill="#f0f0f0"/><path d="M106 1164 l9 9 -9 9z" fill="#f0f0f0"/><path d="M91 1159 q8 -8 20 -3" fill="none" stroke="#f0f0f0" stroke-width="2"/><path d="M110 1152 l6 5 -7 2z" fill="#f0f0f0"/><circle cx="98" cy="1220" r="10.5" fill="none" stroke="#f0f0f0" stroke-width="2.5"/><line x1="106" y1="1228" x2="114" y2="1237" stroke="#f0f0f0" stroke-width="3" stroke-linecap="round"/><g fill="#f0f0f0"><circle cx="89.5" cy="1273.5" r="3.6"/><circle cx="100.5" cy="1273.5" r="3.6"/><circle cx="111.5" cy="1273.5" r="3.6"/></g><rect x="79" y="1317" width="13" height="13" fill="#f0f0f0"/><rect x="73" y="1311" width="12" height="12" fill="#151515" stroke="#f0f0f0" stroke-width="2"/><path d="M108 1313 h8 v10" fill="none" stroke="#f0f0f0" stroke-width="2"/><path d="M106 1313 l4 -4 v8z M116 1328 l-4 -4 h8z" fill="#f0f0f0"/><rect x="91" y="1357" width="36" height="37" fill="#ffffff" stroke="#2a2a2a" stroke-width="1"/><rect x="73" y="1340" width="34" height="34" fill="#141414" stroke="#e8e8e8" stroke-width="3"/><rect x="85" y="1418" width="32" height="24" fill="none" stroke="#f0f0f0" stroke-width="2.2"/><circle cx="101" cy="1430" r="8" fill="none" stroke="#f0f0f0" stroke-width="1.6" stroke-dasharray="2 2"/><rect x="95" y="1466" width="22" height="18" fill="#646464" stroke="#f0f0f0" stroke-width="2.2"/><path d="M95 1474 h-11 v17 h22 v-7" fill="none" stroke="#f0f0f0" stroke-width="2.2"/></svg>
<div class="a" style="left:1638px;top:267px;width:442px;height:1229px;background:#636363;border-radius:6px;box-shadow:0 0 0 1px #4a4a4a"></div><div class="a" style="left:1638px;top:267px;width:442px;height:25px;background:#555555;border-radius:6px 6px 0 0"></div><svg style="left:1649px;top:276px" width="11" height="11"><path d="M1 1 L10 10 M10 1 L1 10" stroke="#d8d8d8" stroke-width="2.2"/></svg><svg style="left:2051px;top:275px" width="15" height="11"><path d="M6 1 L1 5.5 L6 10 M13 1 L8 5.5 L13 10" fill="none" stroke="#e0e0e0" stroke-width="2"/></svg><div class="a" style="left:1638px;top:292px;width:442px;height:54px;background:#514f51;"></div><div class="a" style="left:1638px;top:292px;width:78px;height:54px;background:#636363;"></div><div class="t" style="left:1657px;top:306px;font-size:21px;color:#f2f2f2;font-weight:bold;">图层</div><svg style="left:2049px;top:311px" width="20" height="15"><rect x="0" y="0" width="20" height="2.2" fill="#bdbdbd"/><rect x="0" y="4" width="20" height="2.2" fill="#bdbdbd"/><rect x="0" y="8" width="20" height="2.2" fill="#bdbdbd"/><rect x="0" y="12" width="20" height="2.2" fill="#bdbdbd"/></svg><div class="a" style="left:1647px;top:364px;width:141px;height:34px;background:#595959;border:1.5px solid #6f6f6f;border-radius:5px"></div><svg style="left:1661px;top:371px" width="22" height="22"><circle cx="8.5" cy="8.5" r="6.5" fill="none" stroke="#ececec" stroke-width="2.2"/><line x1="13" y1="13" x2="19" y2="19" stroke="#ececec" stroke-width="2.6"/></svg><div class="t" style="left:1687px;top:370px;font-size:21px;color:#f0f0f0;font-weight:bold;">类型</div><svg style="left:1771px;top:378px" width="12" height="9"><polyline points="1,1 6.0,8 11,1" fill="none" stroke="#dcdcdc" stroke-width="2"/></svg><svg style="left:0;top:0" width="2880" height="1612"><g fill="none" stroke="#e4e4e4" stroke-width="2.2"><rect x="1819" y="371" width="23" height="19"/><path d="M1823 386 l5 -6 3 3 4 -5 4 8z" fill="#e4e4e4" stroke="none"/><circle cx="1876" cy="381" r="9.5"/></g><path d="M1869.3 387.7 A9.5 9.5 0 0 1 1882.7 374.3 Z" fill="#e4e4e4"/><path d="M1912 373 v-3 h21 v3 M1922.5 370 v22 M1917 392 h11" fill="none" stroke="#e4e4e4" stroke-width="2.6"/><g fill="none" stroke="#e4e4e4" stroke-width="2.2"><rect x="1959" y="372" width="18" height="18"/></g><g fill="#e4e4e4"><circle cx="1959" cy="372" r="3"/><circle cx="1977" cy="372" r="3"/><circle cx="1959" cy="390" r="3"/><circle cx="1977" cy="390" r="3"/></g><path d="M2008 379 h8 v12 h-12 v-9 z" fill="#e4e4e4"/><path d="M2011 379 v-7 h10 v13 h-5" fill="none" stroke="#e4e4e4" stroke-width="2"/><rect x="2055" y="364" width="15" height="33" rx="7.5" fill="#5a5a5a" stroke="#6c6c6c" stroke-width="1.5"/><circle cx="2062.5" cy="372" r="7" fill="#f0f0f0"/></svg><div class="a" style="left:1638px;top:407px;width:442px;height:2px;background:#575757;"></div><div class="a" style="left:1647px;top:419px;width:214px;height:35px;background:#595959;border:1.5px solid #6f6f6f;border-radius:5px"></div><div class="t" style="left:1661px;top:426px;font-size:21px;color:#f0f0f0;font-weight:bold;">正常</div><svg style="left:1843px;top:433px" width="12" height="9"><polyline points="1,1 6.0,8 11,1" fill="none" stroke="#dcdcdc" stroke-width="2"/></svg><div class="t" style="left:1870px;top:426px;font-size:21px;color:#f0f0f0;font-weight:bold;">不透明度:</div><div class="a" style="left:1966px;top:419px;width:103px;height:35px;background:#595959;border:1.5px solid #6f6f6f;border-radius:5px"></div><div class="a" style="left:2039px;top:420px;width:1.5px;height:33px;background:#6f6f6f;"></div><div class="t" style="left:1973px;top:427px;font-size:21.5px;color:#f4f4f4;font-weight:bold;">100%</div><svg style="left:2050px;top:433px" width="12" height="9"><polyline points="1,1 6.0,8 11,1" fill="none" stroke="#dcdcdc" stroke-width="2"/></svg><div class="a" style="left:1638px;top:462px;width:442px;height:2px;background:#575757;"></div><div class="t" style="left:1649px;top:481px;font-size:21px;color:#e8e8e8;font-weight:bold;">锁定:</div><svg style="left:0;top:0" width="2880" height="1612"><rect x="1710.0" y="482.0" width="5.4" height="5.2" fill="#8a8a8a"/><rect x="1710.0" y="487.2" width="5.4" height="5.2" fill="#6a6a6a"/><rect x="1710.0" y="492.4" width="5.4" height="5.2" fill="#8a8a8a"/><rect x="1710.0" y="497.6" width="5.4" height="5.2" fill="#6a6a6a"/><rect x="1715.4" y="482.0" width="5.4" height="5.2" fill="#6a6a6a"/><rect x="1715.4" y="487.2" width="5.4" height="5.2" fill="#8a8a8a"/><rect x="1715.4" y="492.4" width="5.4" height="5.2" fill="#6a6a6a"/><rect x="1715.4" y="497.6" width="5.4" height="5.2" fill="#8a8a8a"/><rect x="1720.8" y="482.0" width="5.4" height="5.2" fill="#8a8a8a"/><rect x="1720.8" y="487.2" width="5.4" height="5.2" fill="#6a6a6a"/><rect x="1720.8" y="492.4" width="5.4" height="5.2" fill="#8a8a8a"/><rect x="1720.8" y="497.6" width="5.4" height="5.2" fill="#6a6a6a"/><rect x="1726.2" y="482.0" width="5.4" height="5.2" fill="#6a6a6a"/><rect x="1726.2" y="487.2" width="5.4" height="5.2" fill="#8a8a8a"/><rect x="1726.2" y="492.4" width="5.4" height="5.2" fill="#6a6a6a"/><rect x="1726.2" y="497.6" width="5.4" height="5.2" fill="#8a8a8a"/><rect x="1710" y="482" width="21.6" height="20.8" fill="none" stroke="#8a8a8a" stroke-width="1"/><path d="M1775 482 L1762 496" stroke="#909090" stroke-width="3.5" stroke-linecap="round"/><path d="M1752 503 q1 -6 6 -8 l3 3 q-3 5 -9 5z" fill="#909090"/><g transform="translate(1791,479) scale(0.92)"><path fill="#f2f2f2" d="M14 0 L20 6 L16 6 L16 12 L22 12 L22 8 L28 14 L22 20 L22 16 L16 16 L16 22 L20 22 L14 28 L8 22 L12 22 L12 16 L6 16 L6 20 L0 14 L6 8 L6 12 L12 12 L12 6 L8 6 Z"/></g><g fill="none" stroke="#e8e8e8" stroke-width="2.2"><path d="M1833 486 h24 M1837 480 v22 h22 M1853 483 v14"/><path d="M1852 480 l6 6" /></g><path d="M1882 491 v-5 a6.5 6.5 0 0 1 13 0 v5" fill="none" stroke="#ececec" stroke-width="2.5"/><rect x="1879" y="490" width="19" height="14" rx="1.5" fill="#ececec"/><circle cx="1888.5" cy="497" r="2" fill="#636363"/></svg><div class="t" style="left:1912px;top:481px;font-size:21px;color:#e8e8e8;font-weight:bold;">填充:</div><div class="a" style="left:1966px;top:474px;width:103px;height:33px;background:#595959;border:1.5px solid #6f6f6f;border-radius:5px"></div><div class="a" style="left:2039px;top:475px;width:1.5px;height:31px;background:#6f6f6f;"></div><div class="t" style="left:1973px;top:481px;font-size:21.5px;color:#f4f4f4;font-weight:bold;">100%</div><svg style="left:2050px;top:487px" width="12" height="9"><polyline points="1,1 6.0,8 11,1" fill="none" stroke="#dcdcdc" stroke-width="2"/></svg><div class="a" style="left:1638px;top:521px;width:442px;height:2px;background:#5b5b5b;"></div><svg style="left:0;top:0" width="2880" height="1612"><defs><pattern id="chk" width="8" height="8" patternUnits="userSpaceOnUse"><rect width="8" height="8" fill="#ffffff"/><rect width="4" height="4" fill="#e9e9e9"/><rect x="4" y="4" width="4" height="4" fill="#e9e9e9"/></pattern></defs></svg><div class="a" style="left:1638px;top:523px;width:60px;height:78px;background:#646464;"></div><div class="a" style="left:1698px;top:523px;width:352px;height:78px;background:#7b7a7c;"></div><div class="a" style="left:1696px;top:523px;width:2px;height:78px;background:#5c5c5c;"></div><div class="a" style="left:1638px;top:599.5px;width:412px;height:1.5px;background:#5b5b5b;"></div><svg style="left:0;top:0" width="2880" height="1612"><g transform="translate(1668,562.5)"><path d="M-12.5 0 Q0 -14 12.5 0 Q0 14 -12.5 0Z" fill="#f0f0f0"/><circle cx="0" cy="0" r="4.6" fill="#555"/></g><rect x="1705" y="532" width="44" height="61" fill="url(#chk)" stroke="#1e1e1e" stroke-width="2.5"/><rect x="1724" y="566" width="25" height="27" fill="#6a6a6a" stroke="#1e1e1e" stroke-width="2.5"/><rect x="1730" y="573" width="14" height="14" fill="none" stroke="#e6e6e6" stroke-width="2"/><circle cx="1730" cy="573" r="2.6" fill="#e6e6e6"/><circle cx="1730" cy="587" r="2.6" fill="#e6e6e6"/><circle cx="1744" cy="573" r="2.6" fill="#e6e6e6"/><circle cx="1744" cy="587" r="2.6" fill="#e6e6e6"/><path d="M1736 561 l5 2 -4 1z" fill="#333"/><g fill="none" stroke="#f2f2f2" stroke-width="2.6"><path d="M1701 554 v-18 h18 M1735 536 h18 v18 M1753 577 v18 h-18 M1719 595 h-18 v-18"/></g></svg><div class="t" style="left:1765px;top:552px;font-size:21px;color:#f0f0f0;font-weight:bold;">美洲豹 1</div><div class="a" style="left:1638px;top:601px;width:60px;height:78px;background:#676767;"></div><div class="a" style="left:1698px;top:601px;width:352px;height:78px;background:#676767;"></div><div class="a" style="left:1696px;top:601px;width:2px;height:78px;background:#5c5c5c;"></div><div class="a" style="left:1638px;top:677.5px;width:412px;height:1.5px;background:#5b5b5b;"></div><svg style="left:0;top:0" width="2880" height="1612"><g transform="translate(1668,640.5)"><path d="M-12.5 0 Q0 -14 12.5 0 Q0 14 -12.5 0Z" fill="#f0f0f0"/><circle cx="0" cy="0" r="4.6" fill="#555"/></g><rect x="1705" y="610" width="44" height="61" fill="url(#chk)" stroke="#1e1e1e" stroke-width="2.5"/><rect x="1724" y="644" width="25" height="27" fill="#6a6a6a" stroke="#1e1e1e" stroke-width="2.5"/><rect x="1730" y="651" width="14" height="14" fill="none" stroke="#e6e6e6" stroke-width="2"/><circle cx="1730" cy="651" r="2.6" fill="#e6e6e6"/><circle cx="1730" cy="665" r="2.6" fill="#e6e6e6"/><circle cx="1744" cy="651" r="2.6" fill="#e6e6e6"/><circle cx="1744" cy="665" r="2.6" fill="#e6e6e6"/><path d="M1712 641 q5 -2 7 -8 q0 4 -3 8z" fill="#8e7fd0"/></svg><div class="t" style="left:1765px;top:630px;font-size:21px;color:#f0f0f0;font-weight:bold;">鹿 1</div><div class="a" style="left:1638px;top:680px;width:60px;height:78px;background:#676767;"></div><div class="a" style="left:1698px;top:680px;width:352px;height:78px;background:#676767;"></div><div class="a" style="left:1696px;top:680px;width:2px;height:78px;background:#5c5c5c;"></div><div class="a" style="left:1638px;top:756.5px;width:412px;height:1.5px;background:#5b5b5b;"></div><svg style="left:0;top:0" width="2880" height="1612"><g transform="translate(1668,719.5)"><path d="M-12.5 0 Q0 -14 12.5 0 Q0 14 -12.5 0Z" fill="#f0f0f0"/><circle cx="0" cy="0" r="4.6" fill="#555"/></g><rect x="1705" y="689" width="44" height="61" fill="url(#chk)" stroke="#1e1e1e" stroke-width="2.5"/><rect x="1724" y="723" width="25" height="27" fill="#6a6a6a" stroke="#1e1e1e" stroke-width="2.5"/><rect x="1730" y="730" width="14" height="14" fill="none" stroke="#e6e6e6" stroke-width="2"/><circle cx="1730" cy="730" r="2.6" fill="#e6e6e6"/><circle cx="1730" cy="744" r="2.6" fill="#e6e6e6"/><circle cx="1744" cy="730" r="2.6" fill="#e6e6e6"/><circle cx="1744" cy="744" r="2.6" fill="#e6e6e6"/></svg><div class="t" style="left:1765px;top:709px;font-size:21px;color:#f0f0f0;font-weight:bold;">鹿 1</div><div class="a" style="left:1638px;top:759px;width:60px;height:78px;background:#676767;"></div><div class="a" style="left:1698px;top:759px;width:352px;height:78px;background:#676767;"></div><div class="a" style="left:1696px;top:759px;width:2px;height:78px;background:#5c5c5c;"></div><div class="a" style="left:1638px;top:835.5px;width:412px;height:1.5px;background:#5b5b5b;"></div><svg style="left:0;top:0" width="2880" height="1612"><g transform="translate(1668,798.5)"><path d="M-12.5 0 Q0 -14 12.5 0 Q0 14 -12.5 0Z" fill="#f0f0f0"/><circle cx="0" cy="0" r="4.6" fill="#555"/></g><rect x="1705" y="768" width="44" height="61" fill="url(#chk)" stroke="#1e1e1e" stroke-width="2.5"/><rect x="1724" y="802" width="25" height="27" fill="#6a6a6a" stroke="#1e1e1e" stroke-width="2.5"/><rect x="1730" y="809" width="14" height="14" fill="none" stroke="#e6e6e6" stroke-width="2"/><circle cx="1730" cy="809" r="2.6" fill="#e6e6e6"/><circle cx="1730" cy="823" r="2.6" fill="#e6e6e6"/><circle cx="1744" cy="809" r="2.6" fill="#e6e6e6"/><circle cx="1744" cy="823" r="2.6" fill="#e6e6e6"/></svg><div class="t" style="left:1765px;top:788px;font-size:21px;color:#f0f0f0;font-weight:bold;">鹿 1</div><div class="a" style="left:1638px;top:837px;width:60px;height:78px;background:#676767;"></div><div class="a" style="left:1698px;top:837px;width:352px;height:78px;background:#676767;"></div><div class="a" style="left:1696px;top:837px;width:2px;height:78px;background:#5c5c5c;"></div><div class="a" style="left:1638px;top:913.5px;width:412px;height:1.5px;background:#5b5b5b;"></div><svg style="left:0;top:0" width="2880" height="1612"><g transform="translate(1668,876.5)"><path d="M-12.5 0 Q0 -14 12.5 0 Q0 14 -12.5 0Z" fill="#f0f0f0"/><circle cx="0" cy="0" r="4.6" fill="#555"/></g><rect x="1705" y="846" width="44" height="61" fill="url(#chk)" stroke="#1e1e1e" stroke-width="2.5"/><rect x="1724" y="880" width="25" height="27" fill="#6a6a6a" stroke="#1e1e1e" stroke-width="2.5"/><rect x="1730" y="887" width="14" height="14" fill="none" stroke="#e6e6e6" stroke-width="2"/><circle cx="1730" cy="887" r="2.6" fill="#e6e6e6"/><circle cx="1730" cy="901" r="2.6" fill="#e6e6e6"/><circle cx="1744" cy="887" r="2.6" fill="#e6e6e6"/><circle cx="1744" cy="901" r="2.6" fill="#e6e6e6"/><path d="M1713 874 q6 -6 4 -10 q5 3 3 8 q-3 4 -6 4 z" fill="#f08a6a"/></svg><div class="t" style="left:1765px;top:866px;font-size:21px;color:#f0f0f0;font-weight:bold;">牡鹿 1</div><div class="a" style="left:1638px;top:915px;width:60px;height:78px;background:#676767;"></div><div class="a" style="left:1698px;top:915px;width:352px;height:78px;background:#676767;"></div><div class="a" style="left:1696px;top:915px;width:2px;height:78px;background:#5c5c5c;"></div><div class="a" style="left:1638px;top:991.5px;width:412px;height:1.5px;background:#5b5b5b;"></div><svg style="left:0;top:0" width="2880" height="1612"><g transform="translate(1668,954.5)"><path d="M-12.5 0 Q0 -14 12.5 0 Q0 14 -12.5 0Z" fill="#f0f0f0"/><circle cx="0" cy="0" r="4.6" fill="#555"/></g><rect x="1705" y="924" width="44" height="61" fill="#ffffff" stroke="#2b2b2b" stroke-width="1.5"/></svg><div class="t" style="left:1765px;top:944px;font-size:21px;color:#f0f0f0;font-weight:bold;">背景</div><svg style="left:1995px;top:944px" width="26" height="26"><path d="M6.5 11 v-4 a6.5 6.5 0 0 1 13 0 v4" fill="none" stroke="#e4e4e4" stroke-width="2.2"/><rect x="3.5" y="11" width="19" height="13" rx="1.5" fill="none" stroke="#e4e4e4" stroke-width="2.2"/><rect x="11" y="15.5" width="4" height="4" fill="#e4e4e4"/></svg><div class="a" style="left:1638px;top:1433px;width:442px;height:47px;background:#676767;"></div><div class="a" style="left:1638px;top:1480px;width:442px;height:2px;background:#4e4e4e;"></div><div class="a" style="left:1638px;top:1482px;width:442px;height:14px;background:#5b5b5b;border-radius:0 0 6px 6px"></div><svg style="left:0;top:0" width="2880" height="1612"><g fill="none" stroke="#a8a8a8" stroke-width="2.3"><rect x="1692" y="1451" width="15" height="10" rx="5"/><rect x="1701" y="1451" width="15" height="10" rx="5"/></g><text x="1745" y="1466" font-family="Liberation Serif" font-style="italic" font-size="26" fill="#e4e4e4">fx</text><path d="M1767 1468 h8 l-4 4z" fill="#e4e4e4"/><rect x="1796" y="1446" width="25" height="19" fill="#ececec"/><circle cx="1808.5" cy="1455.5" r="5.5" fill="#636363"/><circle cx="1859" cy="1456" r="9" fill="none" stroke="#e4e4e4" stroke-width="2.2"/><path d="M1852.6 1462.4 A9 9 0 0 1 1865.4 1449.6 Z" fill="#e4e4e4"/><path d="M1866 1468 h8 l-4 4z" fill="#e4e4e4"/><path d="M1900 1447 h9 l2 3 h13 v16 h-24z" fill="#ececec"/><rect x="1952" y="1445" width="22" height="22" fill="none" stroke="#e4e4e4" stroke-width="2.2"/><path d="M1963 1450 v12 M1957 1456 h12" stroke="#e4e4e4" stroke-width="2.2"/><g fill="none" stroke="#e4e4e4" stroke-width="2.2"><path d="M2004 1447 h21 M2011 1447 v-3 h7 v3 M2006 1447 l2 21 h13 l2 -21 M2011 1452 v12 M2014.5 1452 v12 M2018 1452 v12"/></g></svg>
<div class="a" style="left:2185px;top:151px;width:624px;height:1456px;background:#535353;"></div><div class="a" style="left:2190px;top:151px;width:619px;height:25px;background:#535353;"></div><svg style="left:2237px;top:163px" width="15" height="10"><path d="M6 1 L1 5 L6 9 M13 1 L8 5 L13 9" fill="none" stroke="#e0e0e0" stroke-width="2"/></svg><svg style="left:2783px;top:163px" width="15" height="10"><path d="M1 1 L6 5 L1 9 M8 1 L13 5 L8 9" fill="none" stroke="#e0e0e0" stroke-width="2"/></svg><div class="a" style="left:2190px;top:176px;width:71px;height:1431px;background:#646464;"></div><div class="a" style="left:2190px;top:252px;width:71px;height:2px;background:#555555;"></div><svg style="left:2205px;top:183px" width="40" height="6"><rect x="0" y="0" width="2" height="6" fill="#5e5e5e"/><rect x="4" y="0" width="2" height="6" fill="#5e5e5e"/><rect x="8" y="0" width="2" height="6" fill="#5e5e5e"/><rect x="12" y="0" width="2" height="6" fill="#5e5e5e"/><rect x="16" y="0" width="2" height="6" fill="#5e5e5e"/><rect x="20" y="0" width="2" height="6" fill="#5e5e5e"/><rect x="24" y="0" width="2" height="6" fill="#5e5e5e"/><rect x="28" y="0" width="2" height="6" fill="#5e5e5e"/><rect x="32" y="0" width="2" height="6" fill="#5e5e5e"/><rect x="36" y="0" width="2" height="6" fill="#5e5e5e"/></svg><svg style="left:2208px;top:200px" width="36" height="40"><g fill="none" stroke="#f0f0f0" stroke-width="2"><rect x="4.5" y="2.5" width="9" height="9"/><rect x="4.5" y="14" width="9" height="9"/></g><circle cx="9" cy="7" r="1.5" fill="#9a9a9a"/><circle cx="9" cy="18.5" r="1.5" fill="#9a9a9a"/><rect x="3.5" y="26" width="11" height="11" fill="#f0f0f0"/><path d="M20.7 31 Q33 22 28 11" fill="none" stroke="#f0f0f0" stroke-width="3.5"/><path d="M19.6 11 L30.7 5 L32.4 15 Z" fill="#f0f0f0"/></svg><div class="a" style="left:2190px;top:1547px;width:71px;height:1px;background:#686868;"></div><div class="a" style="left:2268px;top:176px;width:541px;height:53px;background:#504e50;"></div><div class="a" style="left:2268px;top:177px;width:74px;height:52px;background:#636363;"></div><div class="t" style="left:2284px;top:191px;font-size:21px;color:#f2f2f2;font-weight:bold;">颜色</div><div class="a" style="left:2344px;top:177px;width:75px;height:52px;background:#555555;"></div><div class="t" style="left:2360px;top:191px;font-size:21px;color:#d4d4d4;font-weight:normal;">色板</div><div class="a" style="left:2421px;top:177px;width:76px;height:52px;background:#555555;"></div><div class="t" style="left:2437px;top:191px;font-size:21px;color:#d4d4d4;font-weight:normal;">渐变</div><div class="a" style="left:2499px;top:177px;width:76px;height:52px;background:#555555;"></div><div class="t" style="left:2515px;top:191px;font-size:21px;color:#d4d4d4;font-weight:normal;">图案</div><svg style="left:2780px;top:195px" width="20" height="15"><rect x="0" y="0" width="20" height="2.2" fill="#bdbdbd"/><rect x="0" y="4" width="20" height="2.2" fill="#bdbdbd"/><rect x="0" y="8" width="20" height="2.2" fill="#bdbdbd"/><rect x="0" y="12" width="20" height="2.2" fill="#bdbdbd"/></svg><div class="a" style="left:2268px;top:229px;width:541px;height:252px;background:#636363;"></div><svg style="left:0;top:0" width="2880" height="1612"><defs><linearGradient id="cf1" x1="0" x2="1"><stop offset="0" stop-color="#ffffff"/><stop offset="1" stop-color="#ff0033"/></linearGradient><linearGradient id="cf2" x1="0" x2="0" y1="0" y2="1"><stop offset="0" stop-color="#000" stop-opacity="0"/><stop offset="1" stop-color="#000" stop-opacity="1"/></linearGradient><linearGradient id="hue" x1="0" x2="0" y1="0" y2="1"><stop offset="0" stop-color="#ff0033"/><stop offset="0.17" stop-color="#ff00ff"/><stop offset="0.33" stop-color="#0000ff"/><stop offset="0.5" stop-color="#00ffff"/><stop offset="0.67" stop-color="#00ff00"/><stop offset="0.83" stop-color="#ffff00"/><stop offset="1" stop-color="#ff0000"/></linearGradient></defs><rect x="2352" y="242" width="357" height="204" fill="url(#cf1)"/><rect x="2352" y="242" width="357" height="204" fill="url(#cf2)"/><rect x="2742" y="242" width="37" height="204" fill="url(#hue)"/><path d="M2352 432 a14 14 0 0 1 14 14" fill="none" stroke="#ddd" stroke-width="2"/><path d="M2724 439 l12 7 -12 7z" fill="#f4f4f4" stroke="#333" stroke-width="1"/><rect x="2305" y="268" width="37" height="37" fill="#ffffff" stroke="#444" stroke-width="1"/><rect x="2283" y="247" width="40" height="41" fill="#7a7a7a"/><rect x="2286" y="250" width="34" height="35" fill="#ffffff"/><rect x="2289" y="253" width="28" height="29" fill="#141414"/></svg><div class="a" style="left:2268px;top:481px;width:541px;height:7px;background:#535353;"></div><div class="a" style="left:2268px;top:488px;width:541px;height:53px;background:#504e50;"></div><div class="a" style="left:2268px;top:489px;width:73px;height:52px;background:#636363;"></div><div class="t" style="left:2284px;top:503px;font-size:21px;color:#f2f2f2;font-weight:bold;">属性</div><div class="a" style="left:2343px;top:489px;width:76px;height:52px;background:#555555;"></div><div class="t" style="left:2359px;top:503px;font-size:21px;color:#d4d4d4;font-weight:normal;">调整</div><div class="a" style="left:2421px;top:489px;width:76px;height:52px;background:#555555;"></div><div class="t" style="left:2437px;top:503px;font-size:21px;color:#d4d4d4;font-weight:normal;">库</div><svg style="left:2780px;top:507px" width="20" height="15"><rect x="0" y="0" width="20" height="2.2" fill="#bdbdbd"/><rect x="0" y="4" width="20" height="2.2" fill="#bdbdbd"/><rect x="0" y="8" width="20" height="2.2" fill="#bdbdbd"/><rect x="0" y="12" width="20" height="2.2" fill="#bdbdbd"/></svg><div class="a" style="left:2268px;top:540px;width:541px;height:458px;background:#636363;"></div><div class="a" style="left:2288px;top:552px;width:41px;height:41px;background:#4c4c4c;border-radius:3px"></div><svg style="left:2293px;top:559px" width="32" height="28"><rect x="0" y="2" width="30" height="22" fill="#f2f2f2"/><circle cx="15" cy="13" r="6.5" fill="#3c3c3c"/><rect x="0" y="22" width="30" height="2" fill="#999"/></svg><div class="t" style="left:2340px;top:561px;font-size:21px;color:#f0f0f0;font-weight:bold;">蒙版</div><div class="a" style="left:2268px;top:604px;width:510px;height:2px;background:#585858;"></div><div class="a" style="left:2778px;top:604px;width:31px;height:394px;background:#5d5d5d;"></div><div class="a" style="left:2784px;top:612px;width:20px;height:268px;background:#6f6f6f;border-radius:10px"></div><div class="a" style="left:2288px;top:621px;width:45px;height:61px;background:#888888;border:1.5px solid #4f4f4f"></div><div class="a" style="left:2317px;top:649px;width:8px;height:2px;background:#333;"></div><div class="t" style="left:2349px;top:638px;font-size:21px;color:#f0f0f0;font-weight:bold;">形状路径</div><svg style="left:2683px;top:636px" width="34" height="32"><rect x="1" y="3" width="22" height="18" fill="#f0f0f0"/><circle cx="12" cy="12" r="5" fill="#555"/><rect x="15" y="14" width="15" height="15" fill="#f0f0f0" stroke="#636363" stroke-width="2"/><path d="M22.5 17 v9 M18 21.5 h9" stroke="#555" stroke-width="2"/></svg><div class="a" style="left:2723px;top:631px;width:40px;height:40px;background:#4b4b4b;border-radius:3px"></div><svg style="left:2731px;top:639px" width="26" height="26"><rect x="5" y="5" width="14" height="14" fill="none" stroke="#f4f4f4" stroke-width="3"/><g fill="#f4f4f4"><rect x="1" y="1" width="8" height="8"/><rect x="15" y="1" width="8" height="8"/><rect x="1" y="15" width="8" height="8"/><rect x="15" y="15" width="8" height="8"/></g></svg><div class="a" style="left:2268px;top:710px;width:510px;height:2px;background:#585858;"></div><div class="t" style="left:2289px;top:748px;font-size:21px;color:#eaeaea;font-weight:bold;">密度:</div><div class="a" style="left:2642px;top:744px;width:112px;height:31px;background:#585858;border:1.5px solid #6c6c6c"></div><div class="t" style="left:2648px;top:750px;font-size:21px;color:#f2f2f2;font-weight:bold;">100%</div><div class="a" style="left:2298px;top:783px;width:448px;height:5px;background:#7d7d7d;border-radius:2px"></div><svg style="left:2736px;top:786px" width="26" height="25"><path d="M12 2 Q14 2 22 14 Q25 22 12 22 Q-1 22 2 14 Q10 2 12 2Z" fill="#f8f8f8" stroke="#3a3a3a" stroke-width="1.5"/></svg><div class="t" style="left:2289px;top:857px;font-size:21px;color:#eaeaea;font-weight:bold;">羽化:</div><div class="a" style="left:2642px;top:853px;width:112px;height:31px;background:#585858;border:1.5px solid #6c6c6c"></div><div class="t" style="left:2648px;top:859px;font-size:21px;color:#f2f2f2;font-weight:bold;">0.0 像素</div><div class="a" style="left:2298px;top:891px;width:448px;height:5px;background:#7d7d7d;border-radius:2px"></div><svg style="left:2284px;top:895px" width="26" height="25"><path d="M12 2 Q14 2 22 14 Q25 22 12 22 Q-1 22 2 14 Q10 2 12 2Z" fill="#f8f8f8" stroke="#3a3a3a" stroke-width="1.5"/></svg><div class="t" style="left:2281px;top:962px;font-size:21px;color:#8c8c8c;font-weight:bold;">调整:</div><div class="a" style="left:2268px;top:997px;width:541px;height:2px;background:#585858;"></div><div class="a" style="left:2268px;top:999px;width:541px;height:48px;background:#646464;"></div><div class="a" style="left:2662px;top:1000px;width:50px;height:45px;background:#555555"></div><svg style="left:0;top:0" width="2880" height="1612"><rect x="2566" y="1012" width="20" height="20" fill="none" stroke="#e0e0e0" stroke-width="2.2" stroke-dasharray="3 3"/><path d="M2632 1012 l11 10 -11 10 -11 -10z" fill="none" stroke="#9a9a9a" stroke-width="2.2"/><path d="M2632 1008 v12 M2628 1016 l4 4 4 -4" stroke="#9a9a9a" stroke-width="2" fill="none"/><g transform="translate(2687,1022)"><path d="M-12.5 0 Q0 -14 12.5 0 Q0 14 -12.5 0Z" fill="#f0f0f0"/><circle cx="0" cy="0" r="4.6" fill="#555"/></g><g fill="none" stroke="#9a9a9a" stroke-width="2.2"><path d="M2731 1012 h21 M2737 1012 v-3 h9 v3 M2733 1012 l2 21 h13 l2 -21 M2738 1017 v12 M2741.5 1017 v12 M2745 1017 v12"/></g></svg><div class="a" style="left:2268px;top:1047px;width:541px;height:5px;background:#535353;"></div><div class="a" style="left:2268px;top:1052px;width:541px;height:53px;background:#504e50;"></div><div class="a" style="left:2268px;top:1053px;width:76px;height:52px;background:#555555;"></div><div class="a" style="left:2346px;top:1053px;width:76px;height:52px;background:#636363;"></div><div class="t" style="left:2284px;top:1066px;font-size:21px;color:#d4d4d4;font-weight:normal;">通道</div><div class="t" style="left:2362px;top:1066px;font-size:21px;color:#f2f2f2;font-weight:bold;">路径</div><svg style="left:2780px;top:1070px" width="20" height="15"><rect x="0" y="0" width="20" height="2.2" fill="#bdbdbd"/><rect x="0" y="4" width="20" height="2.2" fill="#bdbdbd"/><rect x="0" y="8" width="20" height="2.2" fill="#bdbdbd"/><rect x="0" y="12" width="20" height="2.2" fill="#bdbdbd"/></svg><div class="a" style="left:2268px;top:1105px;width:541px;height:463px;background:#626262;"></div><div class="a" style="left:2268px;top:1115px;width:510px;height:69px;background:#7b7a7c;"></div><div class="a" style="left:2273px;top:1119px;width:45px;height:61px;background:#888888;border:1.5px solid #4f4f4f"></div><div class="a" style="left:2302px;top:1146px;width:8px;height:2px;background:#333;"></div><div class="t" style="left:2327px;top:1136px;font-size:21px;color:#f2f2f2;font-weight:bold;">美洲豹 1形状路径</div><div class="a" style="left:2268px;top:1567px;width:541px;height:1.5px;background:#555555;"></div><div class="a" style="left:2268px;top:1568px;width:541px;height:39px;background:#646464;"></div><svg style="left:0;top:0" width="2880" height="1612"><circle cx="2430" cy="1589" r="9" fill="#a6a6a6"/><circle cx="2481.5" cy="1589" r="9" fill="none" stroke="#d8d8d8" stroke-width="2.2"/><circle cx="2533" cy="1589" r="9" fill="none" stroke="#d8d8d8" stroke-width="2" stroke-dasharray="2.5 2.5"/><circle cx="2584.5" cy="1589" r="8" fill="none" stroke="#d8d8d8" stroke-width="2.2"/><g fill="#d8d8d8"><circle cx="2584.5" cy="1579" r="2.5"/><circle cx="2584.5" cy="1599" r="2.5"/><circle cx="2574.5" cy="1589" r="2.5"/><circle cx="2594.5" cy="1589" r="2.5"/></g><rect x="2624" y="1579" width="25" height="20" fill="#ececec"/><circle cx="2636.5" cy="1589" r="5.5" fill="#636363"/><rect x="2683" y="1578" width="22" height="22" fill="none" stroke="#e4e4e4" stroke-width="2.2"/><path d="M2694 1583 v12 M2688 1589 h12" stroke="#e4e4e4" stroke-width="2.2"/><g fill="none" stroke="#9a9a9a" stroke-width="2.2"><path d="M2735 1580 h21 M2741 1580 v-3 h9 v3 M2737 1580 l2 21 h13 l2 -21 M2742 1585 v12 M2745.5 1585 v12 M2749 1585 v12"/></g></svg><svg style="left:2836px;top:791px" width="16" height="27"><path d="M14 1 L2 13.5 L14 26" fill="none" stroke="#8c8c8c" stroke-width="2.5"/></svg>
<svg style="left:0;top:0" width="2880" height="1612"><clipPath id="docclip"><rect x="770" y="352" width="788" height="1118"/></clipPath><g clip-path="url(#docclip)"><defs><path id="deer" d="M1445.0 1161.5 C1445.0 1159.8 1441.6 1148.0 1440.3 1144.0 C1439.0 1140.0 1434.3 1129.4 1433.5 1127.0 C1432.7 1124.6 1433.4 1123.9 1433.8 1123.5 C1434.2 1123.1 1436.1 1122.8 1436.8 1123.6 C1437.5 1124.4 1438.9 1128.9 1439.5 1130.0 C1440.1 1131.1 1441.2 1133.0 1442.0 1133.0 C1442.8 1133.0 1445.6 1132.1 1446.6 1130.0 C1447.6 1127.9 1449.8 1117.7 1450.3 1115.0 C1450.8 1112.3 1450.7 1108.2 1451.2 1107.0 C1451.7 1105.8 1453.5 1104.9 1454.2 1105.0 C1454.9 1105.1 1456.4 1106.2 1456.8 1108.0 C1457.2 1109.8 1456.8 1119.4 1457.3 1120.8 C1457.8 1122.2 1460.1 1121.7 1460.8 1120.0 C1461.5 1118.3 1463.1 1109.3 1463.6 1106.6 C1464.1 1103.9 1464.9 1098.4 1465.5 1097.0 C1466.1 1095.6 1467.9 1094.8 1468.5 1095.0 C1469.1 1095.2 1470.5 1096.2 1470.8 1099.0 C1471.1 1101.8 1470.7 1116.5 1471.0 1118.7 C1471.3 1120.9 1472.4 1118.7 1473.2 1117.5 C1474.0 1116.3 1476.6 1110.0 1477.5 1108.5 C1478.4 1107.0 1479.7 1105.0 1480.5 1104.8 C1481.3 1104.6 1483.8 1106.2 1484.3 1107.0 C1484.8 1107.8 1485.2 1110.5 1484.5 1112.0 C1483.8 1113.5 1480.6 1118.1 1478.5 1120.0 C1476.4 1121.9 1469.3 1126.4 1466.6 1128.3 C1463.9 1130.2 1457.1 1134.9 1455.0 1136.6 C1452.9 1138.3 1449.6 1141.6 1448.7 1143.2 C1447.8 1144.8 1447.2 1148.4 1447.5 1150.0 C1447.8 1151.6 1450.7 1155.2 1451.6 1156.6 C1452.5 1158.0 1453.2 1161.6 1455.0 1162.4 C1456.8 1163.2 1462.9 1162.7 1466.6 1163.2 C1470.3 1163.7 1481.8 1165.8 1486.6 1166.5 C1491.4 1167.2 1505.2 1167.9 1507.4 1169.0 C1509.6 1170.1 1506.6 1174.1 1505.7 1175.7 C1504.8 1177.3 1501.4 1181.1 1499.9 1182.3 C1498.4 1183.5 1494.8 1185.1 1493.2 1185.7 C1491.6 1186.3 1488.0 1186.7 1486.6 1187.3 C1485.2 1187.9 1482.5 1189.4 1481.6 1190.7 C1480.7 1192.0 1479.4 1196.0 1479.0 1198.2 C1478.6 1200.4 1477.5 1205.6 1478.2 1209.8 C1478.9 1214.0 1483.0 1227.6 1485.0 1234.0 C1487.0 1240.4 1492.3 1261.8 1495.3 1264.8 C1498.3 1267.8 1506.5 1260.6 1510.7 1259.7 C1514.9 1258.8 1527.8 1256.9 1531.3 1257.1 C1534.8 1257.3 1539.2 1259.8 1540.3 1261.0 C1541.3 1262.2 1541.1 1265.5 1540.3 1267.4 C1539.5 1269.3 1534.7 1274.6 1533.8 1277.6 C1532.9 1280.6 1533.2 1290.0 1532.6 1293.0 C1532.0 1296.0 1530.4 1301.0 1528.7 1303.3 C1527.0 1305.6 1520.0 1310.7 1518.4 1312.3 C1516.8 1313.9 1515.6 1317.2 1514.6 1317.4 C1513.6 1317.6 1510.2 1315.4 1510.0 1314.0 C1509.8 1312.6 1511.9 1307.1 1513.0 1305.0 C1514.1 1302.9 1518.6 1298.8 1519.5 1296.0 C1520.4 1293.2 1522.7 1281.5 1520.5 1281.0 C1518.3 1280.5 1506.4 1289.2 1500.5 1291.8 C1494.6 1294.4 1477.5 1301.1 1469.7 1303.3 C1461.9 1305.5 1441.5 1309.2 1433.7 1311.0 C1425.9 1312.8 1408.2 1316.6 1403.0 1318.7 C1397.8 1320.8 1391.5 1325.7 1388.8 1329.0 C1386.1 1332.3 1382.6 1343.4 1379.8 1347.0 C1377.0 1350.6 1368.9 1356.5 1364.4 1359.8 C1359.9 1363.1 1345.2 1371.6 1341.3 1375.2 C1337.4 1378.8 1332.8 1386.1 1331.0 1390.6 C1329.2 1395.1 1327.1 1409.7 1325.9 1413.7 C1324.7 1417.7 1322.4 1422.5 1320.8 1425.2 C1319.2 1427.9 1313.4 1435.0 1311.8 1436.8 C1310.2 1438.6 1307.4 1440.9 1306.7 1440.6 C1306.0 1440.3 1305.0 1436.7 1305.9 1434.2 C1306.8 1431.7 1313.1 1423.3 1314.4 1418.8 C1315.7 1414.3 1316.1 1400.5 1317.0 1395.7 C1317.9 1390.9 1319.6 1382.8 1322.1 1377.7 C1324.6 1372.6 1336.4 1356.5 1338.8 1352.0 C1341.2 1347.5 1342.6 1342.5 1342.6 1339.2 C1342.6 1335.9 1339.5 1328.0 1338.8 1323.8 C1338.1 1319.6 1337.4 1306.4 1336.2 1303.3 C1335.0 1300.2 1330.7 1298.4 1328.5 1296.9 C1326.3 1295.4 1318.6 1292.3 1317.0 1290.5 C1315.4 1288.7 1314.0 1283.6 1314.4 1281.5 C1314.8 1279.4 1319.8 1272.3 1320.8 1272.5 C1321.8 1272.7 1322.0 1280.9 1323.4 1282.8 C1324.8 1284.7 1330.0 1288.2 1332.4 1289.2 C1334.8 1290.2 1340.8 1292.5 1343.9 1291.8 C1347.0 1291.1 1353.6 1284.7 1359.3 1282.8 C1365.0 1280.9 1385.2 1277.6 1392.7 1275.1 C1400.2 1272.6 1418.1 1264.4 1423.5 1261.0 C1428.9 1257.6 1436.2 1250.0 1438.9 1245.6 C1441.6 1241.2 1445.6 1227.9 1446.6 1223.7 C1447.6 1219.5 1447.5 1214.7 1447.5 1209.8 C1447.5 1204.9 1446.9 1185.9 1446.6 1181.5 C1446.3 1177.1 1446.2 1174.2 1445.0 1172.4 C1443.8 1170.7 1437.8 1168.2 1436.6 1166.5 C1435.4 1164.8 1434.2 1159.1 1434.6 1158.2 C1435.0 1157.3 1438.8 1158.6 1440.0 1159.0 C1441.2 1159.4 1445.0 1163.2 1445.0 1161.5Z" fill="#a190ca"/></defs><g fill="#fca98e"><path d="M1000.7 615.6 C1002.2 617.2 1013.6 628.4 1016.6 631.2 C1019.6 634.0 1027.5 641.8 1030.4 643.6 C1033.3 645.3 1042.5 648.0 1045.4 648.4 C1048.4 648.8 1056.3 647.9 1060.1 647.7 C1063.9 647.4 1078.8 646.2 1083.4 645.9 C1087.9 645.6 1100.9 645.1 1105.1 644.9 C1109.3 644.7 1120.9 644.2 1125.3 644.0 C1129.7 643.8 1146.6 644.1 1148.8 643.1 C1151.1 642.2 1150.4 635.0 1148.0 634.5 C1145.6 634.0 1129.2 637.7 1124.9 638.2 C1120.6 638.7 1109.1 638.9 1104.9 639.1 C1100.7 639.3 1087.6 639.9 1083.0 640.1 C1078.5 640.3 1063.4 641.0 1059.7 641.1 C1056.1 641.3 1049.0 641.5 1046.4 641.2 C1043.8 640.9 1036.3 639.2 1033.6 637.8 C1030.9 636.5 1022.6 630.2 1019.4 627.8 C1016.2 625.5 1003.6 615.7 1001.7 614.4 C999.8 613.2 999.2 613.9 1000.7 615.6Z"/><path d="M1036.9 607.5 C1037.7 609.3 1044.4 621.1 1045.9 624.1 C1047.5 627.2 1051.1 635.8 1052.1 637.9 C1053.2 640.0 1055.3 645.2 1056.4 645.5 C1057.6 645.7 1063.4 641.7 1063.6 640.5 C1063.8 639.4 1059.7 636.0 1058.3 634.1 C1056.9 632.2 1051.7 624.6 1049.7 621.9 C1047.6 619.1 1039.4 608.1 1038.1 606.7 C1036.9 605.3 1036.1 605.8 1036.9 607.5Z"/><path d="M1086.2 604.4 C1086.1 606.3 1086.8 620.1 1087.0 623.2 C1087.2 626.4 1087.5 633.7 1087.8 635.9 C1088.2 638.1 1088.9 644.8 1090.1 645.1 C1091.3 645.4 1099.6 640.0 1099.9 638.9 C1100.2 637.8 1094.3 635.7 1093.4 634.1 C1092.4 632.5 1091.2 625.8 1090.6 622.8 C1090.0 619.8 1088.1 606.1 1087.6 604.2 C1087.2 602.4 1086.2 602.5 1086.2 604.4Z"/><path d="M1129.1 600.6 C1128.9 602.9 1128.9 619.5 1128.9 623.1 C1128.9 626.7 1128.6 634.6 1128.8 636.7 C1128.9 638.8 1129.1 644.2 1130.2 644.3 C1131.3 644.4 1139.4 638.6 1139.8 637.7 C1140.2 636.8 1135.1 636.8 1134.4 635.3 C1133.7 633.8 1132.9 626.4 1132.5 622.9 C1132.1 619.4 1130.9 602.8 1130.5 600.6 C1130.2 598.3 1129.2 598.4 1129.1 600.6Z"/><path d="M1006.8 704.2 C1008.9 704.6 1023.6 706.0 1027.6 705.9 C1031.6 705.8 1043.3 704.5 1047.1 703.5 C1051.0 702.5 1062.5 697.6 1066.3 695.9 C1070.1 694.2 1080.4 688.8 1085.1 686.5 C1089.8 684.3 1108.3 675.7 1113.0 673.4 C1117.6 671.2 1127.4 665.8 1131.5 664.2 C1135.6 662.6 1152.2 659.0 1154.1 657.2 C1155.9 655.4 1152.5 646.5 1149.9 646.4 C1147.3 646.3 1132.1 654.3 1128.1 656.2 C1124.0 658.1 1113.9 663.3 1109.2 665.6 C1104.5 667.8 1086.0 676.4 1081.3 678.7 C1076.7 680.9 1066.4 686.3 1062.7 687.9 C1059.1 689.6 1048.2 693.9 1044.7 695.1 C1041.1 696.4 1030.8 699.4 1027.0 700.1 C1023.2 700.9 1008.8 702.3 1006.8 702.8 C1004.8 703.2 1004.7 703.9 1006.8 704.2Z"/><path d="M1020.3 669.2 C1021.7 670.5 1032.8 678.4 1035.3 680.6 C1037.8 682.9 1043.9 689.5 1045.0 691.4 C1046.2 693.4 1045.7 699.4 1046.9 699.7 C1048.1 700.0 1056.8 695.6 1057.1 694.3 C1057.5 693.0 1052.5 688.5 1050.6 686.8 C1048.6 685.0 1040.9 679.0 1037.9 677.2 C1035.0 675.3 1022.9 668.8 1021.1 668.0 C1019.3 667.2 1018.9 668.0 1020.3 669.2Z"/><path d="M1054.1 641.7 C1055.2 643.5 1065.1 655.2 1067.2 658.1 C1069.4 661.0 1074.7 668.9 1075.7 671.1 C1076.7 673.4 1076.4 680.2 1077.5 680.8 C1078.6 681.3 1086.5 678.3 1086.9 677.0 C1087.3 675.8 1082.9 670.1 1081.3 667.9 C1079.7 665.6 1073.7 657.7 1071.2 654.9 C1068.7 652.1 1058.0 641.0 1056.3 639.7 C1054.6 638.4 1053.0 639.9 1054.1 641.7Z"/><path d="M1102.0 622.3 C1102.6 624.1 1108.2 636.5 1109.1 639.6 C1110.0 642.7 1111.1 650.6 1111.2 653.4 C1111.3 656.2 1109.2 666.2 1110.2 667.5 C1111.3 668.8 1121.0 668.0 1121.8 666.5 C1122.6 665.0 1119.2 655.0 1118.4 652.2 C1117.5 649.3 1114.6 641.1 1113.1 638.0 C1111.6 635.0 1104.5 623.2 1103.4 621.7 C1102.3 620.1 1101.5 620.5 1102.0 622.3Z"/><path d="M1161.2 603.3 C1160.5 605.2 1157.0 618.9 1155.8 622.4 C1154.6 625.9 1150.3 635.5 1149.1 638.3 C1147.9 641.0 1143.1 648.4 1143.8 650.0 C1144.5 651.6 1154.7 654.9 1156.2 654.0 C1157.7 653.1 1158.3 644.2 1158.9 641.1 C1159.4 638.1 1161.1 627.4 1161.4 623.6 C1161.8 619.9 1162.7 605.6 1162.6 603.5 C1162.6 601.5 1161.8 601.4 1161.2 603.3Z"/><path d="M1184.1 605.7 C1182.7 607.1 1173.8 617.1 1171.7 619.8 C1169.6 622.5 1164.6 630.8 1163.5 632.9 C1162.4 635.0 1160.3 639.8 1160.7 640.7 C1161.1 641.7 1166.9 643.0 1167.7 642.5 C1168.5 641.9 1168.0 637.3 1168.7 635.3 C1169.5 633.3 1173.7 625.1 1175.3 622.2 C1177.0 619.3 1184.4 608.3 1185.3 606.7 C1186.2 605.0 1185.5 604.4 1184.1 605.7Z"/><path d="M1150.0 676.0 C1152.7 675.4 1167.7 676.3 1171.7 677.0 C1175.7 677.7 1187.0 681.3 1190.3 682.6 C1193.6 683.9 1201.6 688.3 1204.3 690.0 C1207.0 691.7 1214.6 696.8 1217.4 700.0 C1220.2 703.2 1230.7 718.8 1232.4 722.5 C1234.1 726.2 1234.5 733.5 1234.2 737.5 C1234.0 741.5 1229.1 760.6 1229.9 762.4 C1230.7 764.1 1239.4 756.9 1242.4 755.0 C1245.4 753.1 1257.3 744.7 1259.8 743.7 C1262.3 742.7 1265.9 743.9 1267.3 745.0 C1268.7 746.1 1272.7 751.9 1273.6 754.9 C1274.5 757.9 1275.7 767.5 1276.0 774.9 C1276.3 782.3 1278.1 823.8 1276.7 829.2 C1275.3 834.6 1263.9 830.0 1262.3 829.2 C1260.7 828.4 1260.5 823.7 1261.1 821.1 C1261.7 818.5 1268.2 806.0 1268.6 803.6 C1269.0 801.2 1265.2 801.3 1264.8 797.4 C1264.4 793.5 1264.6 768.4 1264.2 764.9 C1263.8 761.4 1262.9 761.6 1261.1 762.4 C1259.3 763.1 1249.0 770.9 1246.1 772.4 C1243.2 773.9 1232.0 776.1 1232.4 777.4 C1232.8 778.6 1247.8 783.3 1249.9 784.9 C1252.0 786.5 1253.1 790.2 1253.6 793.6 C1254.1 797.0 1255.0 813.6 1254.8 818.6 C1254.5 823.6 1251.8 839.5 1251.1 843.6 C1250.4 847.7 1247.8 857.7 1247.4 859.8 C1247.0 861.9 1248.2 863.8 1246.7 864.8 C1245.2 865.8 1233.7 869.8 1232.4 869.8 C1231.1 869.8 1232.7 866.8 1233.6 864.8 C1234.5 862.8 1240.2 852.9 1241.1 849.8 C1242.0 846.7 1242.2 838.6 1242.4 833.6 C1242.7 828.6 1243.8 803.6 1243.6 799.9 C1243.3 796.1 1242.5 796.2 1239.9 796.1 C1237.3 796.0 1220.9 798.5 1217.4 798.6 C1213.9 798.7 1207.7 797.8 1204.9 797.4 C1202.2 797.0 1192.4 794.6 1189.9 794.9 C1187.4 795.1 1183.4 798.6 1179.9 799.9 C1176.4 801.1 1160.0 806.1 1155.0 807.4 C1150.0 808.6 1133.9 811.8 1130.0 812.4 C1126.1 813.0 1119.0 812.5 1116.0 813.0 C1113.0 813.5 1102.9 816.2 1099.6 817.7 C1096.3 819.2 1086.0 825.9 1083.0 828.3 C1080.0 830.7 1071.6 838.9 1070.1 841.3 C1068.6 843.7 1067.4 849.4 1067.7 851.9 C1068.0 854.4 1071.8 863.0 1073.6 866.0 C1075.4 869.0 1082.8 878.2 1085.4 881.4 C1088.0 884.6 1097.4 895.1 1099.6 897.9 C1101.8 900.7 1106.9 908.3 1107.2 909.7 C1107.5 911.1 1103.8 912.4 1103.1 912.0 C1102.4 911.6 1101.0 905.6 1100.7 906.1 C1100.4 906.6 1100.7 916.0 1099.6 916.7 C1098.5 917.4 1091.5 914.7 1090.1 913.2 C1088.7 911.7 1085.8 903.3 1085.4 901.4 C1085.1 899.5 1087.5 895.1 1086.6 894.3 C1085.7 893.5 1077.3 894.6 1076.0 893.2 C1074.7 891.8 1075.0 883.7 1073.6 880.2 C1072.2 876.7 1063.8 861.1 1061.9 857.8 C1060.0 854.5 1054.4 849.0 1054.2 847.2 C1054.0 845.4 1060.0 840.1 1059.5 840.1 C1059.0 840.1 1050.6 845.6 1048.9 847.2 C1047.2 848.9 1043.3 853.5 1043.0 856.6 C1042.7 859.7 1043.8 873.8 1045.4 877.8 C1047.1 881.8 1056.7 893.3 1059.5 896.7 C1062.3 900.1 1071.8 910.0 1073.6 912.0 C1075.4 914.0 1077.2 916.1 1077.2 916.7 C1077.2 917.3 1074.3 918.2 1073.6 917.9 C1072.9 917.5 1070.3 912.6 1070.1 913.2 C1069.9 913.8 1072.2 922.9 1071.3 923.8 C1070.4 924.7 1061.9 924.0 1060.7 922.6 C1059.5 921.2 1060.6 911.6 1059.5 909.7 C1058.4 907.8 1051.5 906.3 1050.1 903.8 C1048.7 901.3 1047.1 889.1 1045.4 884.9 C1043.8 880.6 1035.5 865.1 1033.6 861.3 C1031.7 857.5 1026.0 849.7 1026.5 847.2 C1027.0 844.7 1036.7 839.1 1038.3 836.6 C1039.9 834.1 1042.1 825.7 1042.4 822.5 C1042.8 819.3 1041.6 808.0 1041.8 804.8 C1042.0 801.6 1044.9 792.3 1044.2 790.6 C1043.5 788.9 1035.2 788.3 1034.7 787.7 C1034.2 787.1 1038.0 785.7 1039.5 784.7 C1041.0 783.7 1047.5 779.6 1050.1 777.7 C1052.7 775.8 1062.3 767.7 1065.4 765.9 C1068.5 764.1 1077.6 761.1 1080.7 760.0 C1083.8 758.9 1090.9 756.7 1096.0 755.0 C1101.1 753.3 1126.1 745.6 1131.5 743.3 C1136.9 740.9 1148.3 735.5 1150.4 731.5 C1152.5 727.5 1153.3 708.0 1152.7 703.2 C1152.1 698.4 1144.8 685.9 1144.5 683.2 C1144.2 680.5 1147.3 676.6 1150.0 676.0Z"/><path d="M1148.4 638.8 C1150.1 637.5 1163.2 639.0 1167.0 638.8 C1170.8 638.6 1184.4 636.5 1186.6 637.0 C1188.8 637.5 1185.1 641.8 1188.5 643.4 C1191.9 645.0 1217.7 651.5 1221.0 652.8 C1224.3 654.1 1223.2 655.6 1222.0 656.5 C1220.8 657.4 1210.4 661.2 1208.9 662.0 C1207.4 662.8 1206.4 664.2 1207.1 664.9 C1207.8 665.6 1214.8 668.0 1215.5 668.6 C1216.2 669.2 1215.6 670.1 1213.6 670.5 C1211.5 670.9 1199.2 671.6 1195.0 672.3 C1190.8 672.9 1175.4 676.8 1171.7 677.0 C1168.0 677.2 1159.6 675.2 1157.7 674.2 C1155.8 673.2 1153.7 668.9 1153.0 666.7 C1152.3 664.5 1150.8 654.6 1150.3 651.8 C1149.8 649.0 1146.7 640.1 1148.4 638.8Z"/><path d="M1128.8 681.2 C1128.8 679.6 1135.9 670.0 1139.0 667.7 C1142.1 665.4 1150.8 663.4 1152.1 664.0 C1153.4 664.6 1150.1 670.2 1148.4 672.3 C1146.7 674.4 1141.6 678.6 1139.0 679.8 C1136.4 681.0 1128.8 682.8 1128.8 681.2Z"/></g><g fill="none" stroke="#ffffff" stroke-width="1.2" stroke-linecap="round"><path d="M1142.8 681.6 L1154 668.6"/><path d="M1155 669.5 Q1162 677 1185.7 678.9"/><path d="M1201.2 768 Q1210 775 1236 778.7"/><path d="M1183.7 787.4 L1192.4 796.1"/><path d="M1099 787.1 Q1097 805 1092.5 813 Q1080 822 1054.8 842.5"/><path d="M1055 637 L1062 645"/></g><ellipse cx="1179" cy="648" rx="2" ry="1.3" fill="#ffffff"/><use href="#deer"/><use href="#deer" transform="translate(-235.4,-215.4)"/><use href="#deer" transform="translate(-490.1,-394.3)"/><path d="M1261.2 427.4 C1261.5 425.8 1263.6 418.6 1265.0 417.4 C1266.4 416.1 1271.9 415.6 1275.0 414.9 C1278.1 414.1 1291.6 410.5 1296.2 409.9 C1300.8 409.3 1317.5 408.3 1321.1 408.6 C1324.7 408.9 1329.3 412.6 1332.4 413.0 C1335.5 413.4 1345.9 412.7 1352.3 413.0 C1358.7 413.3 1389.8 414.4 1396.0 416.1 C1402.2 417.8 1410.3 426.6 1414.7 429.9 C1419.1 433.1 1434.7 445.9 1439.7 448.6 C1444.7 451.3 1461.4 455.8 1464.6 457.3 C1467.8 458.8 1471.3 462.0 1472.1 463.6 C1472.8 465.2 1472.5 472.2 1472.1 473.5 C1471.7 474.8 1469.2 477.1 1468.4 476.7 C1467.7 476.3 1466.2 471.0 1464.6 469.8 C1463.0 468.6 1455.3 465.9 1452.2 464.8 C1449.1 463.7 1437.3 460.7 1433.4 458.6 C1429.5 456.5 1415.5 444.2 1413.5 443.6 C1411.5 443.0 1413.2 450.7 1413.5 452.3 C1413.8 453.9 1414.6 458.1 1416.0 459.8 C1417.4 461.6 1425.3 468.1 1427.2 469.8 C1429.1 471.6 1433.6 475.1 1434.7 477.3 C1435.8 479.6 1438.4 490.2 1438.4 492.3 C1438.4 494.4 1435.6 498.0 1434.7 498.5 C1433.8 499.0 1430.0 497.9 1429.7 497.3 C1429.5 496.7 1432.3 494.1 1432.2 492.3 C1432.1 490.6 1430.2 481.8 1428.5 479.8 C1426.8 477.8 1417.6 473.8 1414.7 472.3 C1411.8 470.8 1402.2 466.3 1399.7 464.8 C1397.2 463.3 1390.9 456.1 1389.8 457.3 C1388.7 458.6 1388.5 474.7 1388.5 477.3 C1388.5 479.9 1390.7 481.6 1389.8 483.5 C1388.9 485.4 1382.0 494.6 1379.8 496.0 C1377.5 497.4 1368.7 497.4 1367.3 497.3 C1365.9 497.2 1364.5 495.9 1365.4 494.8 C1366.3 493.7 1374.7 487.6 1376.0 486.0 C1377.3 484.4 1378.9 480.1 1378.5 478.5 C1378.1 476.9 1373.3 472.4 1372.3 469.8 C1371.3 467.2 1369.0 455.1 1368.6 452.3 C1368.2 449.6 1369.6 442.8 1368.6 442.3 C1367.6 441.8 1361.1 446.6 1358.6 447.3 C1356.1 448.1 1346.6 449.4 1343.6 449.8 C1340.6 450.2 1329.8 448.4 1328.6 451.1 C1327.3 453.9 1330.7 473.3 1331.1 477.3 C1331.5 481.3 1332.8 489.0 1332.4 491.0 C1332.0 493.0 1328.7 496.7 1327.4 497.3 C1326.2 497.9 1320.8 497.0 1319.9 496.6 C1319.0 496.2 1318.1 494.2 1318.6 493.5 C1319.1 492.8 1324.4 491.4 1324.9 489.8 C1325.4 488.2 1324.2 481.1 1323.6 477.3 C1323.0 473.6 1320.0 455.1 1318.6 452.3 C1317.2 449.6 1311.8 449.1 1309.9 449.8 C1308.0 450.6 1302.5 457.1 1299.9 459.8 C1297.3 462.6 1286.9 474.4 1283.7 477.3 C1280.5 480.2 1269.9 487.2 1267.5 488.5 C1265.1 489.8 1260.9 490.0 1260.0 489.8 C1259.1 489.6 1257.6 487.7 1258.7 486.6 C1259.8 485.5 1268.8 480.7 1271.2 478.5 C1273.6 476.3 1280.2 467.8 1282.4 464.8 C1284.7 461.8 1292.5 450.9 1293.7 448.6 C1295.0 446.4 1295.8 443.6 1294.9 442.3 C1294.0 441.1 1287.2 436.6 1284.9 436.1 C1282.7 435.6 1274.3 436.9 1272.4 437.3 C1270.5 437.7 1267.2 440.2 1266.2 439.8 C1265.2 439.4 1263.0 434.8 1262.5 433.6 C1262.0 432.4 1261.0 429.0 1261.2 427.4Z" fill="#141214"/><path d="M1372 442 L1373 465 L1379 459 L1384 470 L1388 468 L1383 457 L1392 457 Z" fill="none" stroke="#9a9a9a" stroke-width="1"/></g><defs><linearGradient id="ttg" x1="0" x2="0" y1="0" y2="1"><stop offset="0" stop-color="#474747"/><stop offset="1" stop-color="#5c5c5c"/></linearGradient></defs><rect x="1408" y="352.5" width="143" height="62.5" rx="7" fill="url(#ttg)" stroke="#6a6a6a" stroke-width="1"/></svg>
<svg style="left:1420px;top:360px" width="30" height="22"><rect x="2.5" y="2.5" width="3" height="16" fill="#f2f2f2"/><path d="M7 10 L12 6 V8.7 H18 V11.3 H12 V14z" fill="#f2f2f2"/><rect x="23" y="6" width="3.2" height="3.2" fill="#f2f2f2"/><rect x="23" y="14" width="3.2" height="3.2" fill="#f2f2f2"/></svg>
<div class="t" style="left:1475px;top:361px;font-size:19px;color:#f4f4f4;font-weight:bold;">31 像素</div>
<div class="t" style="left:1423px;top:384px;font-size:20px;color:#f4f4f4;font-weight:bold;letter-spacing:0.2px">下:1338 像素</div>
<div class="t" style="left:1311px;top:1474px;font-size:54px;color:#ffffff;font-weight:300;transform:scaleX(0.68);transform-origin:0 0">然</div>
<div class="t" style="left:1380px;top:1474px;font-size:54px;color:#ffffff;font-weight:300;transform:scaleX(0.68);transform-origin:0 0">后</div>
<div class="t" style="left:1441px;top:1474px;font-size:54px;color:#ffffff;font-weight:300;transform:scaleX(0.68);transform-origin:0 0">移</div>
<div class="t" style="left:1510px;top:1474px;font-size:54px;color:#ffffff;font-weight:300;transform:scaleX(0.68);transform-origin:0 0">动</div></body></html>
